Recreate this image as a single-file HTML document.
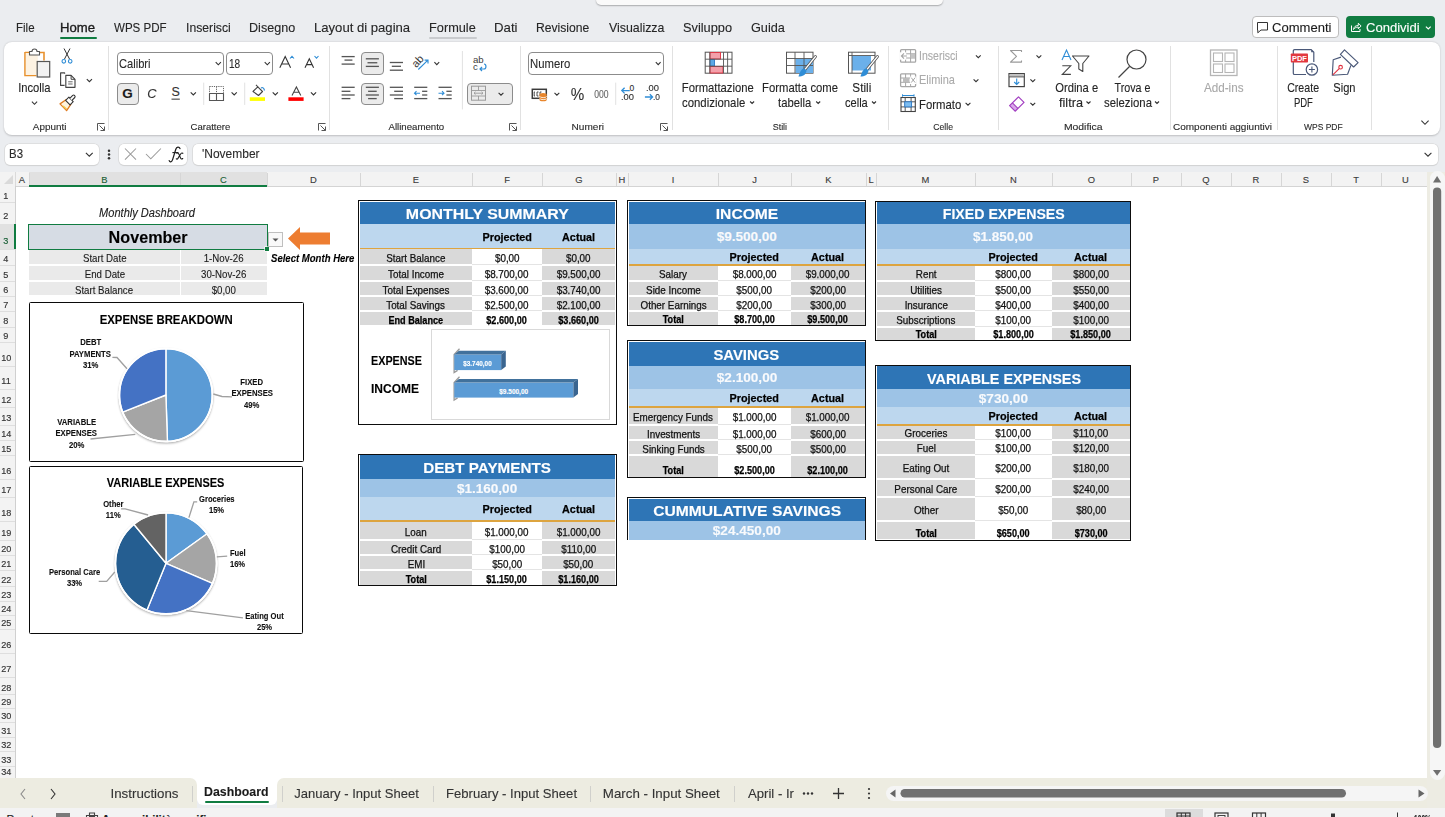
<!DOCTYPE html><html><head><meta charset="utf-8"><style>
*{margin:0;padding:0}
html,body{width:1445px;height:817px;overflow:hidden}
body{background:#EBEDF0;position:relative;font-family:"Liberation Sans",sans-serif}
.t{position:absolute;white-space:nowrap}
.r{position:absolute}
svg{overflow:visible}
</style></head><body>
<div class="r" style="left:596px;top:-10px;width:347px;height:15px;background:#FAFAFA;border-radius:0 0 5px 5px;box-shadow:0 1px 1.5px rgba(0,0,0,0.28)"></div>
<div class="t" style="left:16.00px;top:20.47px;font-size:13.4px;line-height:15.40px;color:#262626;transform:scaleX(0.8614);transform-origin:0 0;-webkit-text-stroke:0.12px currentColor;">File</div>
<div class="t" style="left:60.00px;top:20.47px;font-size:13.4px;line-height:15.40px;color:#1b1b1b;transform:scaleX(0.9791);transform-origin:0 0;-webkit-text-stroke:0.35px #1b1b1b;">Home</div>
<div class="t" style="left:114.30px;top:20.47px;font-size:13.4px;line-height:15.40px;color:#262626;transform:scaleX(0.8633);transform-origin:0 0;-webkit-text-stroke:0.12px currentColor;">WPS PDF</div>
<div class="t" style="left:185.50px;top:20.47px;font-size:13.4px;line-height:15.40px;color:#262626;transform:scaleX(0.9116);transform-origin:0 0;-webkit-text-stroke:0.12px currentColor;">Inserisci</div>
<div class="t" style="left:248.60px;top:20.47px;font-size:13.4px;line-height:15.40px;color:#262626;transform:scaleX(0.9397);transform-origin:0 0;-webkit-text-stroke:0.12px currentColor;">Disegno</div>
<div class="t" style="left:313.80px;top:20.47px;font-size:13.4px;line-height:15.40px;color:#262626;transform:scaleX(0.9781);transform-origin:0 0;-webkit-text-stroke:0.12px currentColor;">Layout di pagina</div>
<div class="t" style="left:429.00px;top:20.47px;font-size:13.4px;line-height:15.40px;color:#262626;transform:scaleX(0.9523);transform-origin:0 0;-webkit-text-stroke:0.12px currentColor;">Formule</div>
<div class="t" style="left:493.80px;top:20.47px;font-size:13.4px;line-height:15.40px;color:#262626;transform:scaleX(0.9862);transform-origin:0 0;-webkit-text-stroke:0.12px currentColor;">Dati</div>
<div class="t" style="left:536.30px;top:20.47px;font-size:13.4px;line-height:15.40px;color:#262626;transform:scaleX(0.9058);transform-origin:0 0;-webkit-text-stroke:0.12px currentColor;">Revisione</div>
<div class="t" style="left:609.00px;top:20.47px;font-size:13.4px;line-height:15.40px;color:#262626;transform:scaleX(0.9220);transform-origin:0 0;-webkit-text-stroke:0.12px currentColor;">Visualizza</div>
<div class="t" style="left:683.40px;top:20.47px;font-size:13.4px;line-height:15.40px;color:#262626;transform:scaleX(0.9552);transform-origin:0 0;-webkit-text-stroke:0.12px currentColor;">Sviluppo</div>
<div class="t" style="left:750.50px;top:20.47px;font-size:13.4px;line-height:15.40px;color:#262626;transform:scaleX(0.9480);transform-origin:0 0;-webkit-text-stroke:0.12px currentColor;">Guida</div>
<div class="r" style="left:60px;top:37px;width:36.5px;height:2.2px;background:#107C41;border-radius:1.1px;"></div>
<div class="r" style="left:428.5px;top:37.2px;width:48px;height:1.6px;background:#C9CBCE;border-radius:1px;"></div>
<div class="r" style="left:1252px;top:16px;width:86.5px;height:22px;background:#fff;border:1px solid #BDBDBD;border-radius:4px;box-sizing:border-box"></div>
<svg class="r" style="left:1255px;top:21px" width="16" height="14"><path d="M2.5 1.5 h10 v7.5 h-6.5 l-3.2 2.8 v-2.8 h-0.3 z" stroke="#333" stroke-width="1" fill="none" stroke-linejoin="round"/></svg>
<div class="t" style="left:1271.50px;top:19.77px;font-size:13.4px;line-height:15.40px;color:#1b1b1b;transform:scaleX(0.9744);transform-origin:0 0;-webkit-text-stroke:0.12px currentColor;">Commenti</div>
<div class="r" style="left:1346px;top:16px;width:89px;height:22px;background:#107C41;border-radius:4px"></div>
<svg class="r" style="left:1350px;top:21px" width="12" height="12"><path d="M1.5 4.5 v6 h8.5 v-2.5" stroke="#fff" stroke-width="1" fill="none"/><path d="M3.5 8.5 c0.4-2.8 2-4 4.8-4 v-2.3 l2.8 2.8 -2.8 2.8 v-1.8 c-2 0 -3.5 0.8 -4.8 2.5z" stroke="#fff" stroke-width="0.95" fill="none" stroke-linejoin="round"/></svg>
<div class="t" style="left:1365.50px;top:19.77px;font-size:13.4px;line-height:15.40px;color:#fff;transform:scaleX(0.9742);transform-origin:0 0;-webkit-text-stroke:0.12px currentColor;">Condividi</div>
<svg class="r" style="left:1420px;top:22px" width="14" height="12"><path d="M5.9,4.6 L8.3,7.0 L10.700000000000001,4.6" stroke="#fff" stroke-width="1.2" fill="none"/></svg>
<div class="r" style="left:4px;top:41.5px;width:1436px;height:93.8px;background:#fff;border-radius:8px;box-shadow:0 0.5px 2px rgba(0,0,0,0.20)"></div>
<svg class="r" style="left:0;top:0" width="1445" height="140">
<path d="M25 52.5 h5 M39.5 52.5 h4.5 v8" stroke="#E8912D" stroke-width="1.6" fill="none"/>
<path d="M25 52 v23.5 h11.5" stroke="#E8912D" stroke-width="1.6" fill="none"/>
<rect x="25.8" y="53" width="12" height="22" fill="#FDF3E3"/>
<path d="M29.5 55 v-3.5 h2.5 a2.5 2.5 0 0 1 5 0 h2.5 v3.5 z" stroke="#555" stroke-width="1.1" fill="#fff" stroke-linejoin="round"/>
<rect x="37.2" y="61.5" width="12.5" height="15.5" fill="#F2F2F2" stroke="#555" stroke-width="1.2"/>
<path d="M31.9,101.7 L34.5,104.3 L37.1,101.7" stroke="#333" stroke-width="1.1" fill="none"/>
<path d="M64 48.5 L69.5 59 M70 48.5 L64.5 59" stroke="#333" stroke-width="1" fill="none"/>
<circle cx="63.8" cy="61.3" r="1.8" stroke="#2F8DD6" stroke-width="1.1" fill="none"/><circle cx="70.2" cy="61.3" r="1.8" stroke="#2F8DD6" stroke-width="1.1" fill="none"/>
<path d="M64.6 73.8 V72.9 H60.6 V85.4 H64.6" stroke="#444" stroke-width="1.15" fill="none" stroke-linejoin="round"/>
<path d="M65.8 75.4 H71.1 L75 79.3 V87.3 H65.8 Z" stroke="#444" stroke-width="1.15" fill="#fff" stroke-linejoin="round"/><path d="M71.1 75.4 V79.3 H75" stroke="#444" stroke-width="1" fill="none"/><path d="M68.2 81.8 H72.6 M68.2 84 H72.6" stroke="#555" stroke-width="0.9"/>
<path d="M86.80000000000001,79.10000000000001 L89.4,81.7 L92.0,79.10000000000001" stroke="#333" stroke-width="1.1" fill="none"/>
<path d="M60 103.9 L66 99.7 L70.8 104.3 L66.6 110.6 Z" stroke="#E07B20" stroke-width="1.3" fill="#FFF3DC" stroke-linejoin="round"/><path d="M63 106 L66.5 109" stroke="#F2C94C" stroke-width="1.6"/>
<path d="M65.6 100.3 L68.9 97.2 L73.2 101.6 L70.1 104.8 Z" stroke="#333" stroke-width="1.1" fill="#fff" stroke-linejoin="round"/>
<path d="M69.8 98.3 L72.7 95.4 A1.5 1.5 0 0 1 74.8 97.5 L71.9 100.4" stroke="#333" stroke-width="1.1" fill="#fff" stroke-linejoin="round"/>
</svg>
<div class="t" style="left:15.23px;top:80.47px;font-size:13.4px;line-height:15.40px;color:#242424;transform:scaleX(0.8364);transform-origin:50% 0;-webkit-text-stroke:0.12px currentColor;">Incolla</div>
<div class="t" style="left:32.58px;top:120.83px;font-size:9.8px;line-height:11.26px;color:#2a2a2a;transform:scaleX(1.0109);transform-origin:50% 0;-webkit-text-stroke:0.12px currentColor;">Appunti</div>
<svg class="r" style="left:97px;top:122.5px" width="9" height="9"><path d="M0.5 7.5 v-7 h7" stroke="#555" stroke-width="1" fill="none"/><path d="M2.5 2.5 L7.5 7.5 M7.5 3.5 v4 h-4" stroke="#555" stroke-width="1" fill="none"/></svg>
<div class="r" style="left:108.3px;top:46px;width:1px;height:84px;background:#E1E1E1;"></div>
<div class="r" style="left:116.5px;top:52.3px;width:107.5px;height:22.5px;background:#fff;border:1px solid #8C8C8C;border-radius:4px;box-sizing:border-box"></div>
<div class="t" style="left:119.30px;top:56.64px;font-size:13px;line-height:14.94px;color:#2b2b2b;transform:scaleX(0.8550);transform-origin:0 0;-webkit-text-stroke:0.12px currentColor;">Calibri</div>
<div class="r" style="left:226.3px;top:52.3px;width:47.19999999999999px;height:22.5px;background:#fff;border:1px solid #8C8C8C;border-radius:4px;box-sizing:border-box"></div>
<div class="t" style="left:229.10px;top:56.64px;font-size:13px;line-height:14.94px;color:#2b2b2b;transform:scaleX(0.7745);transform-origin:0 0;-webkit-text-stroke:0.12px currentColor;">18</div>
<div class="r" style="left:116.5px;top:82.6px;width:22.30000000000001px;height:22.0px;background:#EBEBEB;border:1px solid #8C8C8C;border-radius:4px;box-sizing:border-box"></div>
<svg class="r" style="left:0;top:0" width="1445" height="140">
<path d="M215.70000000000002,62.2 L218.3,64.8 L220.9,62.2" stroke="#333" stroke-width="1.1" fill="none"/>
<path d="M264.7,62.2 L267.3,64.8 L269.90000000000003,62.2" stroke="#333" stroke-width="1.1" fill="none"/>
<path d="M279.8 67.8 L285.2 56.6 L290.6 67.8 M281.6 64 h7.2" stroke="#333" stroke-width="1.1" fill="none"/>
<path d="M290 58.5 L292 56.3 L294 58.5" stroke="#2F8DD6" stroke-width="1.1" fill="none"/>
<path d="M305 67.8 L309.3 58.7 L313.6 67.8 M306.6 64.6 h5.4" stroke="#333" stroke-width="1.1" fill="none"/>
<path d="M314.5 56 L316.5 58.2 L318.5 56" stroke="#2F8DD6" stroke-width="1.1" fill="none"/>
<rect x="171.5" y="98.6" width="8.3" height="1.1" fill="#444"/>
<path d="M190.70000000000002,92.4 L193.3,95.0 L195.9,92.4" stroke="#333" stroke-width="1.1" fill="none"/>

<rect x="203.2" y="82.6" width="1" height="22.3" fill="#E1E1E1"/>
<path d="M209.5 86.5 h14 v14 h-14 z M216.5 86.5 v14 M209.5 93.5 h14" stroke="#666" stroke-width="1" fill="none" stroke-dasharray="1.2 1"/>
<path d="M209.5 93.5 v7 h14 v-7 M216.5 93.5 v7 M209.5 93.5 h14" stroke="#555" stroke-width="1.1" fill="none"/>
<path d="M231.6,92.4 L234.2,95.0 L236.79999999999998,92.4" stroke="#333" stroke-width="1.1" fill="none"/>
<rect x="244.2" y="82.6" width="1" height="22.3" fill="#E1E1E1"/>
<path d="M253 91.5 L257.8 86.8 L262.5 91.5 L258.5 95.5 Z" stroke="#444" stroke-width="1.1" fill="#fff" stroke-linejoin="round"/><path d="M256 84.8 l2 2.2" stroke="#444" stroke-width="1.1"/>
<path d="M261 88 q2.5 -1.5 3.5 2.5" stroke="#2F8DD6" stroke-width="1.2" fill="none"/>
<rect x="249.8" y="97.3" width="15.2" height="3.6" fill="#FFFF00"/>
<path d="M272.7,92.4 L275.3,95.0 L277.90000000000003,92.4" stroke="#333" stroke-width="1.1" fill="none"/>
<path d="M292 95.4 L296.4 87 L300.8 95.4 M293.6 92.3 h5.6" stroke="#444" stroke-width="1.1" fill="none"/>
<rect x="288.4" y="97.3" width="15.2" height="3.6" fill="#FF0000"/>
<path d="M310.9,92.4 L313.5,95.0 L316.1,92.4" stroke="#333" stroke-width="1.1" fill="none"/>
</svg>
<div class="t" style="left:122.35px;top:85.58px;font-size:13.5px;line-height:15.51px;color:#1b1b1b;font-weight:bold;-webkit-text-stroke:0.12px currentColor;">G</div>
<div class="t" style="left:147.13px;top:85.58px;font-size:13.5px;line-height:15.51px;color:#333;transform:scaleX(0.9500);transform-origin:50% 0;font-style:italic;-webkit-text-stroke:0.12px currentColor;">C</div>
<div class="t" style="left:171.53px;top:85.49px;font-size:12.5px;line-height:14.36px;color:#333;-webkit-text-stroke:0.12px currentColor;">S</div>
<div class="t" style="left:190.37px;top:120.83px;font-size:9.8px;line-height:11.26px;color:#2a2a2a;transform:scaleX(0.9718);transform-origin:50% 0;-webkit-text-stroke:0.12px currentColor;">Carattere</div>
<svg class="r" style="left:318.3px;top:122.5px" width="9" height="9"><path d="M0.5 7.5 v-7 h7" stroke="#555" stroke-width="1" fill="none"/><path d="M2.5 2.5 L7.5 7.5 M7.5 3.5 v4 h-4" stroke="#555" stroke-width="1" fill="none"/></svg>
<div class="r" style="left:328.6px;top:46px;width:1px;height:84px;background:#E1E1E1;"></div>
<div class="r" style="left:361.3px;top:52.2px;width:22.5px;height:22.39999999999999px;background:#EBEBEB;border:1px solid #8C8C8C;border-radius:4px;box-sizing:border-box"></div>
<div class="r" style="left:361.3px;top:82.5px;width:22.5px;height:22.0px;background:#EBEBEB;border:1px solid #8C8C8C;border-radius:4px;box-sizing:border-box"></div>
<div class="r" style="left:467.4px;top:82.5px;width:45.4px;height:22px;background:#EBEBEB;border:1px solid #8C8C8C;border-radius:4px;box-sizing:border-box"></div>
<svg class="r" style="left:0;top:0" width="1445" height="140">
<rect x="341.6" y="55.95" width="13.099999999999966" height="1.3" fill="#555"/><rect x="344.5" y="59.45" width="7.899999999999977" height="1.3" fill="#555"/><rect x="341.6" y="63.449999999999996" width="13.099999999999966" height="1.3" fill="#555"/>
<rect x="365.8" y="58.15" width="13.099999999999966" height="1.3" fill="#555"/><rect x="367.5" y="62.1" width="9.800000000000011" height="1.3" fill="#555"/><rect x="365.8" y="65.75" width="13.099999999999966" height="1.3" fill="#555"/>
<rect x="389.8" y="61.85" width="13.199999999999989" height="1.3" fill="#555"/><rect x="391.8" y="65.64999999999999" width="9.199999999999989" height="1.3" fill="#555"/><rect x="389.8" y="69.55" width="13.199999999999989" height="1.3" fill="#555"/>
<text x="0" y="0" transform="translate(416.2 68.3) rotate(-47)" font-family="Liberation Sans" font-size="11" fill="#333">ab</text>
<path d="M418.3 69.5 L427.9 60.2 M424.6 60.1 h3.4 v3.4" stroke="#2F8DD6" stroke-width="1.15" fill="none"/>
<path d="M434.40000000000003,62.199999999999996 L436.8,64.6 L439.2,62.199999999999996" stroke="#333" stroke-width="1.1" fill="none"/>
<rect x="461.9" y="51" width="1" height="58.4" fill="#E1E1E1"/>
<text x="473" y="62.9" font-family="Liberation Sans" font-size="9.6" fill="#3a3a3a">ab</text><text x="473" y="69.9" font-family="Liberation Sans" font-size="9.6" fill="#3a3a3a">c</text>
<path d="M484 64 c2.6 0 2.6 5 0 5 h-4 M482 67 l-2 2 2 2" stroke="#2F8DD6" stroke-width="1.2" fill="none"/>
<rect x="341.6" y="86.64999999999999" width="13.099999999999966" height="1.3" fill="#555"/><rect x="341.6" y="90.64999999999999" width="8.799999999999955" height="1.3" fill="#555"/><rect x="341.6" y="94.35" width="13.099999999999966" height="1.3" fill="#555"/><rect x="341.6" y="97.94999999999999" width="8.799999999999955" height="1.3" fill="#555"/>
<rect x="365.8" y="86.64999999999999" width="13.099999999999966" height="1.3" fill="#555"/><rect x="368.1" y="90.64999999999999" width="8.599999999999966" height="1.3" fill="#555"/><rect x="365.8" y="94.35" width="13.099999999999966" height="1.3" fill="#555"/><rect x="368.1" y="97.94999999999999" width="8.599999999999966" height="1.3" fill="#555"/>
<rect x="389.8" y="86.64999999999999" width="13.199999999999989" height="1.3" fill="#555"/><rect x="394.2" y="90.64999999999999" width="8.800000000000011" height="1.3" fill="#555"/><rect x="389.8" y="94.35" width="13.199999999999989" height="1.3" fill="#555"/><rect x="394.2" y="97.94999999999999" width="8.800000000000011" height="1.3" fill="#555"/>
<rect x="414.2" y="86.64999999999999" width="13.100000000000023" height="1.3" fill="#555"/><rect x="422.1" y="90.64999999999999" width="5.199999999999989" height="1.3" fill="#555"/><rect x="422.1" y="94.35" width="5.199999999999989" height="1.3" fill="#555"/><rect x="414.2" y="97.94999999999999" width="13.100000000000023" height="1.3" fill="#555"/>
<path d="M420 93.2 h-5.5 M416.5 91.2 l-2 2 2 2" stroke="#2F8DD6" stroke-width="1.1" fill="none"/>
<rect x="438.5" y="86.64999999999999" width="13.199999999999989" height="1.3" fill="#555"/><rect x="446.4" y="90.64999999999999" width="5.300000000000011" height="1.3" fill="#555"/><rect x="446.4" y="94.35" width="5.300000000000011" height="1.3" fill="#555"/><rect x="438.5" y="97.94999999999999" width="13.199999999999989" height="1.3" fill="#555"/>
<path d="M438.5 93.2 h5.5 M442 91.2 l2 2 -2 2" stroke="#2F8DD6" stroke-width="1.1" fill="none"/>
<rect x="471.5" y="86.2" width="14" height="14" fill="none" stroke="#9A9A9A" stroke-width="1"/><path d="M471.5 90.5 h14 M471.5 96 h14 M478.5 86.2 v4.3 M478.5 96 v4.2" stroke="#9A9A9A" stroke-width="0.9"/><path d="M474 93.2 h9 M475.5 91.8 l-1.5 1.4 1.5 1.4 M481.5 91.8 l1.5 1.4 -1.5 1.4" stroke="#9A9A9A" stroke-width="0.9" fill="none"/>
<path d="M498.6,92.8 L501,95.2 L503.4,92.8" stroke="#333" stroke-width="1.1" fill="none"/>
</svg>
<div class="t" style="left:388.27px;top:120.83px;font-size:9.8px;line-height:11.26px;color:#2a2a2a;transform:scaleX(0.9831);transform-origin:50% 0;-webkit-text-stroke:0.12px currentColor;">Allineamento</div>
<svg class="r" style="left:508.5px;top:122.5px" width="9" height="9"><path d="M0.5 7.5 v-7 h7" stroke="#555" stroke-width="1" fill="none"/><path d="M2.5 2.5 L7.5 7.5 M7.5 3.5 v4 h-4" stroke="#555" stroke-width="1" fill="none"/></svg>
<div class="r" style="left:520.2px;top:46px;width:1px;height:84px;background:#E1E1E1;"></div>
<div class="r" style="left:528.1px;top:52.2px;width:135.69999999999993px;height:22.39999999999999px;background:#fff;border:1px solid #8C8C8C;border-radius:4px;box-sizing:border-box"></div>
<div class="t" style="left:530.40px;top:56.64px;font-size:13px;line-height:14.94px;color:#2b2b2b;transform:scaleX(0.8716);transform-origin:0 0;-webkit-text-stroke:0.12px currentColor;">Numero</div>
<svg class="r" style="left:0;top:0" width="1445" height="140">
<path d="M655.8000000000001,62.199999999999996 L658.2,64.6 L660.6,62.199999999999996" stroke="#333" stroke-width="1.1" fill="none"/>
<rect x="532.3" y="89.3" width="14" height="9" fill="none" stroke="#3a3a3a" stroke-width="1.5"/><path d="M535 92 h-0.8 v4 h0.8 M538.5 92 h-1.5 v4 h1.5 M541.5 92 h-1.5 v4 h1.5" stroke="#3a3a3a" stroke-width="0.9" fill="none"/>
<path d="M539.5 94.5 a3.6 1.5 0 0 1 7.2 0 v5.2 a3.6 1.5 0 0 1 -7.2 0 z" fill="#E8852A"/><path d="M539.8 96.3 a3.4 1.3 0 0 0 6.8 0 M539.8 98.3 a3.4 1.3 0 0 0 6.8 0" stroke="#fff" stroke-width="0.8" fill="none"/>
<path d="M554.5,92.8 L556.9,95.2 L559.3,92.8" stroke="#333" stroke-width="1.1" fill="none"/>
<rect x="615.2" y="82.6" width="1" height="22.3" fill="#E1E1E1"/>
<path d="M629.8 90.6 H621.8 M624.6 87.8 L621.8 90.6 L624.6 93.4" stroke="#2F8DD6" stroke-width="1.3" fill="none"/>
<path d="M644.9 97 H652.6 M649.8 94.2 L652.6 97 L649.8 99.8" stroke="#2F8DD6" stroke-width="1.3" fill="none"/>
</svg>
<div class="t" style="left:570.44px;top:84.91px;font-size:17px;line-height:19.53px;color:#333;transform:scaleX(0.8931);transform-origin:50% 0;-webkit-text-stroke:0.12px currentColor;">%</div>
<div class="t" style="left:593.46px;top:88.65px;font-size:10px;line-height:11.49px;color:#666;transform:scaleX(0.8570);transform-origin:50% 0;-webkit-text-stroke:0.12px currentColor;">000</div>
<div class="t" style="left:629.50px;top:84.11px;font-size:8.5px;line-height:9.77px;color:#333;-webkit-text-stroke:0.12px currentColor;">0</div>
<div class="t" style="left:621.00px;top:92.61px;font-size:8.5px;line-height:9.77px;color:#333;transform:scaleX(1.1002);transform-origin:0 0;-webkit-text-stroke:0.12px currentColor;">.00</div>
<div class="t" style="left:646.00px;top:84.41px;font-size:8.5px;line-height:9.77px;color:#333;transform:scaleX(1.1002);transform-origin:0 0;-webkit-text-stroke:0.12px currentColor;">.00</div>
<div class="t" style="left:652.50px;top:92.61px;font-size:8.5px;line-height:9.77px;color:#333;transform:scaleX(0.9875);transform-origin:0 0;-webkit-text-stroke:0.12px currentColor;">.0</div>
<div class="t" style="left:571.71px;top:120.83px;font-size:9.8px;line-height:11.26px;color:#2a2a2a;transform:scaleX(1.0259);transform-origin:50% 0;-webkit-text-stroke:0.12px currentColor;">Numeri</div>
<svg class="r" style="left:660px;top:122.5px" width="9" height="9"><path d="M0.5 7.5 v-7 h7" stroke="#555" stroke-width="1" fill="none"/><path d="M2.5 2.5 L7.5 7.5 M7.5 3.5 v4 h-4" stroke="#555" stroke-width="1" fill="none"/></svg>
<div class="r" style="left:671.5px;top:46px;width:1px;height:84px;background:#E1E1E1;"></div>
<svg class="r" style="left:0;top:0" width="1445" height="140">
<rect x="705.2" y="52.2" width="26.8" height="21" fill="#fff" stroke="#555" stroke-width="1"/>
<rect x="710" y="52.5" width="10.5" height="6.5" fill="#F4A0AA" stroke="#E0303F" stroke-width="0.9"/>
<rect x="710" y="59.5" width="4.5" height="6.6" fill="#5DA8E5" stroke="#2F7BC8" stroke-width="0.9"/>
<rect x="710" y="66.5" width="13" height="6.5" fill="#F4A0AA" stroke="#E0303F" stroke-width="0.9"/>
<path d="M705.2 59.2 h26.8 M705.2 66.2 h26.8 M709.8 52.2 v21 M723.5 52.2 v21 M727.6 52.2 v21" stroke="#555" stroke-width="0.9"/>
<rect x="786.5" y="52.2" width="26.5" height="21" fill="#fff" stroke="#555" stroke-width="1"/>
<rect x="795.5" y="59" width="17.5" height="14" fill="#6BB0EA"/>
<path d="M786.5 58.5 h26.5 M786.5 65.5 h26.5 M795 52.2 v21 M804 52.2 v21" stroke="#555" stroke-width="0.9"/>
<path d="M815.5 56.5 L804.5 70" stroke="#555" stroke-width="2.8" stroke-linecap="round"/><path d="M815.5 56.5 L804.5 70" stroke="#fff" stroke-width="1.2" stroke-linecap="round"/>
<path d="M804.5 68.5 c-3 0 -4.5 3 -6 8 c4 0 7.5 -1.5 8 -6 z" fill="#2F8DD6"/>
<rect x="848.5" y="52.2" width="26.5" height="21" fill="#fff" stroke="#555" stroke-width="1"/>
<rect x="852" y="56" width="19" height="14.5" fill="#6BB0EA"/>
<path d="M848.5 55.5 h26.5 M852 52.2 v21" stroke="#555" stroke-width="0.9"/>
<path d="M877.5 56.5 L866.5 70" stroke="#555" stroke-width="2.8" stroke-linecap="round"/><path d="M877.5 56.5 L866.5 70" stroke="#fff" stroke-width="1.2" stroke-linecap="round"/>
<path d="M866.5 68.5 c-3 0 -4.5 3 -6 8 c4 0 7.5 -1.5 8 -6 z" fill="#2F8DD6"/>
<path d="M750.1,101.5 L752.1,103.5 L754.1,101.5" stroke="#333" stroke-width="1.1" fill="none"/>
<path d="M816.2,101.5 L818.2,103.5 L820.2,101.5" stroke="#333" stroke-width="1.1" fill="none"/>
<path d="M872.0,101.5 L874,103.5 L876.0,101.5" stroke="#333" stroke-width="1.1" fill="none"/>
</svg>
<div class="t" style="left:675.17px;top:79.97px;font-size:13.4px;line-height:15.40px;color:#242424;transform:scaleX(0.8406);transform-origin:50% 0;-webkit-text-stroke:0.12px currentColor;">Formattazione</div>
<div class="t" style="left:681.60px;top:95.17px;font-size:13.4px;line-height:15.40px;color:#242424;transform:scaleX(0.8497);transform-origin:0 0;-webkit-text-stroke:0.12px currentColor;">condizionale</div>
<div class="t" style="left:755.15px;top:79.97px;font-size:13.4px;line-height:15.40px;color:#242424;transform:scaleX(0.8435);transform-origin:50% 0;-webkit-text-stroke:0.12px currentColor;">Formatta come</div>
<div class="t" style="left:778.10px;top:95.17px;font-size:13.4px;line-height:15.40px;color:#242424;transform:scaleX(0.8433);transform-origin:0 0;-webkit-text-stroke:0.12px currentColor;">tabella</div>
<div class="t" style="left:850.50px;top:79.97px;font-size:13.4px;line-height:15.40px;color:#242424;transform:scaleX(0.8753);transform-origin:50% 0;-webkit-text-stroke:0.12px currentColor;">Stili</div>
<div class="t" style="left:845.20px;top:95.17px;font-size:13.4px;line-height:15.40px;color:#242424;transform:scaleX(0.8273);transform-origin:0 0;-webkit-text-stroke:0.12px currentColor;">cella</div>
<div class="t" style="left:772.00px;top:120.83px;font-size:9.8px;line-height:11.26px;color:#2a2a2a;transform:scaleX(0.9119);transform-origin:50% 0;-webkit-text-stroke:0.12px currentColor;">Stili</div>
<div class="r" style="left:888.4px;top:46px;width:1px;height:84px;background:#E1E1E1;"></div>
<svg class="r" style="left:0;top:0" width="1445" height="140">
<rect x="900.6" y="49.6" width="15" height="12.6" rx="1" fill="#fff" stroke="#A6A6A6" stroke-width="1.3"/><path d="M900.6 53.8 H915.6 M900.6 58 H915.6 M905.6 49.6 V62.2 M910.6 49.6 V62.2" stroke="#A6A6A6" stroke-width="1"/><rect x="910.6" y="53.8" width="4.4" height="4.2" fill="#C4C4C4"/><rect x="900" y="52.3" width="6.2" height="7.4" fill="#fff"/><path d="M906.8 56 H901.6 M904 53.4 L901.4 56 L904 58.6" stroke="#A6A6A6" stroke-width="1.1" fill="none"/>
<rect x="900.6" y="73.8" width="15" height="12.8" rx="1" fill="#fff" stroke="#A6A6A6" stroke-width="1.3"/><path d="M900.6 78 H915.6 M900.6 82.3 H915.6 M905.6 73.8 V86.6 M910.6 73.8 V86.6" stroke="#A6A6A6" stroke-width="1"/><rect x="903" y="78" width="6.5" height="4.3" fill="#BDBDBD"/><rect x="910" y="76.6" width="6.5" height="7.4" fill="#fff"/><path d="M911.2 77.6 L915.2 82.6 M915.2 77.6 L911.2 82.6" stroke="#A6A6A6" stroke-width="1"/>
<rect x="901" y="97.5" width="14.3" height="14" fill="none" stroke="#444" stroke-width="1.1"/><path d="M901 101.8 h14.3 M901 106.9 h14.3 M905.2 97.5 v14 M911.1 97.5 v14" stroke="#444" stroke-width="0.9"/><rect x="904.7" y="101.8" width="6.9" height="5.1" fill="#7DBDF0" stroke="#2F7BC8" stroke-width="0.9"/><path d="M902.5 95.5 h11.5 M902.5 94.3 v2.4 M914 94.3 v2.4" stroke="#2F8DD6" stroke-width="1"/>
<path d="M975.9,55.3 L978.3,57.7 L980.6999999999999,55.3" stroke="#333" stroke-width="1.1" fill="none"/>
<path d="M973.6,79.3 L976,81.7 L978.4,79.3" stroke="#333" stroke-width="1.1" fill="none"/>
<path d="M965.6,102.8 L968,105.2 L970.4,102.8" stroke="#333" stroke-width="1.1" fill="none"/>
</svg>
<div class="t" style="left:919.30px;top:48.27px;font-size:13.4px;line-height:15.40px;color:#ABABAB;transform:scaleX(0.7875);transform-origin:0 0;-webkit-text-stroke:0.12px currentColor;">Inserisci</div>
<div class="t" style="left:919.30px;top:72.47px;font-size:13.4px;line-height:15.40px;color:#ABABAB;transform:scaleX(0.8193);transform-origin:0 0;-webkit-text-stroke:0.12px currentColor;">Elimina</div>
<div class="t" style="left:919.30px;top:96.77px;font-size:13.4px;line-height:15.40px;color:#242424;transform:scaleX(0.8478);transform-origin:0 0;-webkit-text-stroke:0.12px currentColor;">Formato</div>
<div class="t" style="left:931.53px;top:120.83px;font-size:9.8px;line-height:11.26px;color:#2a2a2a;transform:scaleX(0.8866);transform-origin:50% 0;-webkit-text-stroke:0.12px currentColor;">Celle</div>
<div class="r" style="left:997.6px;top:46px;width:1px;height:84px;background:#E1E1E1;"></div>
<svg class="r" style="left:0;top:0" width="1445" height="140">
<path d="M1021.5 52 v-1.5 h-11 l6 5.8 -6 5.8 h11 v-1.5" stroke="#999" stroke-width="1.1" fill="none" stroke-linejoin="round"/>
<path d="M1036.5,55.3 L1038.9,57.7 L1041.3000000000002,55.3" stroke="#333" stroke-width="1.1" fill="none"/>
<rect x="1009" y="73.6" width="15.3" height="13" fill="#fff" stroke="#444" stroke-width="1.2"/><rect x="1009.6" y="74.2" width="14.1" height="2.4" fill="#BFBFBF"/><path d="M1009 76.9 h15.3" stroke="#444" stroke-width="0.9"/><path d="M1016.7 78.5 v6 M1014.2 82 l2.5 2.5 2.5 -2.5" stroke="#2F8DD6" stroke-width="1.1" fill="none"/>
<path d="M1030.3999999999999,79.3 L1032.8,81.7 L1035.2,79.3" stroke="#333" stroke-width="1.1" fill="none"/>
<path d="M1009.6 105.7 L1012.4 102.9 L1017.9 108.4 L1015.1 111.2 Z" fill="#D9A8EA"/><path d="M1009.6 105.7 L1018.5 96.8 L1024 102.4 L1015.1 111.2 Z M1012.4 102.9 L1017.9 108.4" fill="none" stroke="#A23FC1" stroke-width="1.2" stroke-linejoin="round"/>
<path d="M1030.3999999999999,102.8 L1032.8,105.2 L1035.2,102.8" stroke="#333" stroke-width="1.1" fill="none"/>
<path d="M1062 60 L1066.5 50 L1071 60 M1063.6 56.5 h5.8" stroke="#2F8DD6" stroke-width="1.1" fill="none"/><path d="M1062.3 65.8 h8.4 l-8.4 8.6 h8.6" stroke="#444" stroke-width="1.1" fill="none"/>
<path d="M1072.5 56 h16.5 l-6.2 7.5 v8 l-4 -2.5 v-5.5 z" stroke="#444" stroke-width="1.1" fill="none" stroke-linejoin="round"/>
<path d="M1086.5,101.5 L1088.5,103.5 L1090.5,101.5" stroke="#333" stroke-width="1.1" fill="none"/>
<circle cx="1136.5" cy="59.5" r="9.5" stroke="#444" stroke-width="1.2" fill="none"/><path d="M1129.5 66.5 L1118.5 77.5" stroke="#444" stroke-width="1.3"/>
<path d="M1155.0,101.5 L1157,103.5 L1159.0,101.5" stroke="#333" stroke-width="1.1" fill="none"/>
</svg>
<div class="t" style="left:1050.50px;top:79.97px;font-size:13.4px;line-height:15.40px;color:#242424;transform:scaleX(0.8347);transform-origin:50% 0;-webkit-text-stroke:0.12px currentColor;">Ordina e</div>
<div class="t" style="left:1059.00px;top:95.17px;font-size:13.4px;line-height:15.40px;color:#242424;transform:scaleX(0.9480);transform-origin:0 0;-webkit-text-stroke:0.12px currentColor;">filtra</div>
<div class="t" style="left:1109.83px;top:79.97px;font-size:13.4px;line-height:15.40px;color:#242424;transform:scaleX(0.7990);transform-origin:50% 0;-webkit-text-stroke:0.12px currentColor;">Trova e</div>
<div class="t" style="left:1103.70px;top:95.17px;font-size:13.4px;line-height:15.40px;color:#242424;transform:scaleX(0.8478);transform-origin:0 0;-webkit-text-stroke:0.12px currentColor;">seleziona</div>
<div class="t" style="left:1065.15px;top:120.83px;font-size:9.8px;line-height:11.26px;color:#2a2a2a;transform:scaleX(1.0605);transform-origin:50% 0;-webkit-text-stroke:0.12px currentColor;">Modifica</div>
<div class="r" style="left:1170.2px;top:46px;width:1px;height:84px;background:#E1E1E1;"></div>
<svg class="r" style="left:0;top:0" width="1445" height="140">
<rect x="1210.5" y="50" width="26.5" height="25.5" fill="none" stroke="#B5B5B5" stroke-width="1.3"/><rect x="1213.5" y="53" width="9" height="8.5" fill="none" stroke="#B5B5B5" stroke-width="1.1"/><rect x="1225" y="53" width="9" height="8.5" fill="none" stroke="#B5B5B5" stroke-width="1.1"/><rect x="1213.5" y="64" width="9" height="8.5" fill="none" stroke="#B5B5B5" stroke-width="1.1"/><rect x="1225" y="64" width="9" height="8.5" fill="none" stroke="#B5B5B5" stroke-width="1.1"/>
<path d="M1306 74.5 H1294.6 a1.3 1.3 0 0 1 -1.3 -1.3 V50.9 a1.3 1.3 0 0 1 1.3 -1.3 H1311.2 L1313.8 52.2 V62" stroke="#4A5878" stroke-width="1.2" fill="#fff" stroke-linejoin="round"/><path d="M1311.2 49.6 L1313.8 52.2 L1311.2 52.2 Z" fill="#4A5878"/>
<rect x="1290.8" y="53.5" width="17.2" height="9.1" rx="0.8" fill="#E2383F"/><text x="1291.9" y="61.2" font-family="Liberation Sans" font-size="8" font-weight="bold" fill="#fff" textLength="15" lengthAdjust="spacingAndGlyphs">PDF</text>
<circle cx="1311.9" cy="69.5" r="5.7" fill="#fff" stroke="#4A5878" stroke-width="1.2"/><path d="M1311.9 66.5 v6 M1308.9 69.5 h6" stroke="#4A5878" stroke-width="1.1"/>
<path d="M1340.9 57.1 L1333.2 59.8 L1332.3 75.3 L1347.6 74.2 L1350.9 65.4" stroke="#4A5878" stroke-width="1.15" fill="#fff" stroke-linejoin="round"/>
<path d="M1340.4 54.3 L1344.5 49.8 L1358.1 62.6 L1353.6 67 Z" stroke="#4A5878" stroke-width="1.15" fill="#fff" stroke-linejoin="round"/>
<path d="M1332.8 74.8 L1339.2 68.6" stroke="#E0303F" stroke-width="1.1"/><circle cx="1340.6" cy="67.2" r="1.8" fill="#fff" stroke="#E0303F" stroke-width="1.1"/>
<path d="M1421.4,120.7 L1425,124.3 L1428.6,120.7" stroke="#333" stroke-width="1.1" fill="none"/>
</svg>
<div class="t" style="left:1201.08px;top:79.97px;font-size:13.4px;line-height:15.40px;color:#A8A8A8;transform:scaleX(0.8715);transform-origin:50% 0;-webkit-text-stroke:0.12px currentColor;">Add-ins</div>
<div class="t" style="left:1174.21px;top:120.83px;font-size:9.8px;line-height:11.26px;color:#2a2a2a;transform:scaleX(1.0209);transform-origin:50% 0;-webkit-text-stroke:0.12px currentColor;">Componenti aggiuntivi</div>
<div class="r" style="left:1276.5px;top:46px;width:1px;height:84px;background:#E1E1E1;"></div>
<div class="t" style="left:1283.09px;top:79.97px;font-size:13.4px;line-height:15.40px;color:#242424;transform:scaleX(0.7931);transform-origin:50% 0;-webkit-text-stroke:0.12px currentColor;">Create</div>
<div class="t" style="left:1290.10px;top:95.17px;font-size:13.4px;line-height:15.40px;color:#242424;transform:scaleX(0.7089);transform-origin:50% 0;-webkit-text-stroke:0.12px currentColor;">PDF</div>
<div class="t" style="left:1330.99px;top:79.97px;font-size:13.4px;line-height:15.40px;color:#242424;transform:scaleX(0.8277);transform-origin:50% 0;-webkit-text-stroke:0.12px currentColor;">Sign</div>
<div class="t" style="left:1300.98px;top:120.83px;font-size:9.8px;line-height:11.26px;color:#2a2a2a;transform:scaleX(0.8668);transform-origin:50% 0;-webkit-text-stroke:0.12px currentColor;">WPS PDF</div>
<div class="r" style="left:1371.2px;top:46px;width:1px;height:84px;background:#E1E1E1;"></div>
<div class="r" style="left:4.6px;top:143.6px;width:94.6px;height:21.6px;background:#fff;border-radius:5px;box-shadow:0 0 0 0.6px #D4D4D4, 0 0.6px 1px rgba(0,0,0,0.12)"></div>
<div class="t" style="left:9.30px;top:146.63px;font-size:13px;line-height:14.94px;color:#2b2b2b;transform:scaleX(0.8804);transform-origin:0 0;-webkit-text-stroke:0.12px currentColor;">B3</div>
<div class="r" style="left:119px;top:143.6px;width:68.3px;height:21.6px;background:#fff;border-radius:5px;box-shadow:0 0 0 0.6px #D4D4D4, 0 0.6px 1px rgba(0,0,0,0.12)"></div>
<div class="r" style="left:192.6px;top:143.6px;width:1245.5px;height:21.6px;background:#fff;border-radius:5px;box-shadow:0 0 0 0.6px #D4D4D4, 0 0.6px 1px rgba(0,0,0,0.12)"></div>
<div class="t" style="left:202.40px;top:146.63px;font-size:13px;line-height:14.94px;color:#2b2b2b;transform:scaleX(0.9223);transform-origin:0 0;-webkit-text-stroke:0.12px currentColor;">'November</div>
<svg class="r" style="left:0;top:0" width="1445" height="170">
<path d="M85.89999999999999,152.8 L89.3,156.2 L92.7,152.8" stroke="#333" stroke-width="1.1" fill="none"/>
<circle cx="109" cy="150.7" r="1.25" fill="#333"/><circle cx="109" cy="154.4" r="1.25" fill="#333"/><circle cx="109" cy="158.2" r="1.25" fill="#333"/>
<path d="M125 148.5 L136 159.7 M136 148.5 L125 159.7" stroke="#9A9A9A" stroke-width="1.05"/>
<path d="M146 154 L150.8 158.8 L160.9 148.5" stroke="#9A9A9A" stroke-width="1.05" fill="none"/>
<path d="M1424.6,152.8 L1428,156.2 L1431.4,152.8" stroke="#333" stroke-width="1.1" fill="none"/>
</svg>
<svg class="r" style="left:0;top:0" width="200" height="170"><path d="M180 148.6 C179.2 146.6 176.6 146.6 175.8 149.2 L172.6 159.6 C171.8 162.3 169.8 162.4 169.2 160.6" stroke="#1e1e1e" stroke-width="1.25" fill="none" stroke-linecap="round"/><path d="M172.4 152.6 H178.4" stroke="#1e1e1e" stroke-width="1.1"/><path d="M176.8 153.2 C177.9 152.5 178.6 153.2 179.1 154.6 L180.5 157.9 C181 159.1 181.8 159.3 182.7 158.5 M182.8 153.3 C181.9 152.5 181 153.2 180.2 154.6 L178.3 157.7 C177.7 158.9 177 159.4 176.3 158.8" stroke="#1e1e1e" stroke-width="1.15" fill="none" stroke-linecap="round"/></svg>
<div class="r" style="left:15px;top:186px;width:1412px;height:592.5px;background:#fff"></div>
<div class="r" style="left:0px;top:171.5px;width:1430px;height:14.5px;background:#F3F3F3;"></div>
<div class="r" style="left:0px;top:185.5px;width:1430px;height:0.8px;background:#D4D4D4;"></div>
<svg class="r" style="left:0;top:172px" width="15" height="14"><path d="M13 3 L13 12 L4 12 Z" fill="#DADADA"/></svg>
<div class="r" style="left:29px;top:171.5px;width:151px;height:14.5px;background:#E1E1E1;"></div>
<div class="r" style="left:180px;top:171.5px;width:87px;height:14.5px;background:#E1E1E1;"></div>
<div class="r" style="left:28.5px;top:173px;width:1px;height:12.5px;background:#D6D6D6;"></div>
<div class="t" style="left:18.86px;top:174.69px;font-size:9.4px;line-height:10.80px;color:#3a3a3a;-webkit-text-stroke:0.12px currentColor;">A</div>
<div class="r" style="left:179.5px;top:173px;width:1px;height:12.5px;background:#D6D6D6;"></div>
<div class="t" style="left:101.36px;top:174.69px;font-size:9.4px;line-height:10.80px;color:#185E34;-webkit-text-stroke:0.12px currentColor;">B</div>
<div class="r" style="left:266.5px;top:173px;width:1px;height:12.5px;background:#D6D6D6;"></div>
<div class="t" style="left:220.11px;top:174.69px;font-size:9.4px;line-height:10.80px;color:#185E34;-webkit-text-stroke:0.12px currentColor;">C</div>
<div class="r" style="left:359.5px;top:173px;width:1px;height:12.5px;background:#D6D6D6;"></div>
<div class="t" style="left:310.11px;top:174.69px;font-size:9.4px;line-height:10.80px;color:#3a3a3a;-webkit-text-stroke:0.12px currentColor;">D</div>
<div class="r" style="left:471.5px;top:173px;width:1px;height:12.5px;background:#D6D6D6;"></div>
<div class="t" style="left:412.86px;top:174.69px;font-size:9.4px;line-height:10.80px;color:#3a3a3a;-webkit-text-stroke:0.12px currentColor;">E</div>
<div class="r" style="left:541.5px;top:173px;width:1px;height:12.5px;background:#D6D6D6;"></div>
<div class="t" style="left:504.13px;top:174.69px;font-size:9.4px;line-height:10.80px;color:#3a3a3a;-webkit-text-stroke:0.12px currentColor;">F</div>
<div class="r" style="left:615.5px;top:173px;width:1px;height:12.5px;background:#D6D6D6;"></div>
<div class="t" style="left:575.34px;top:174.69px;font-size:9.4px;line-height:10.80px;color:#3a3a3a;-webkit-text-stroke:0.12px currentColor;">G</div>
<div class="r" style="left:627.5px;top:173px;width:1px;height:12.5px;background:#D6D6D6;"></div>
<div class="t" style="left:618.61px;top:174.69px;font-size:9.4px;line-height:10.80px;color:#3a3a3a;-webkit-text-stroke:0.12px currentColor;">H</div>
<div class="r" style="left:717.5px;top:173px;width:1px;height:12.5px;background:#D6D6D6;"></div>
<div class="t" style="left:671.69px;top:174.69px;font-size:9.4px;line-height:10.80px;color:#3a3a3a;-webkit-text-stroke:0.12px currentColor;">I</div>
<div class="r" style="left:790.5px;top:173px;width:1px;height:12.5px;background:#D6D6D6;"></div>
<div class="t" style="left:752.15px;top:174.69px;font-size:9.4px;line-height:10.80px;color:#3a3a3a;-webkit-text-stroke:0.12px currentColor;">J</div>
<div class="r" style="left:865.5px;top:173px;width:1px;height:12.5px;background:#D6D6D6;"></div>
<div class="t" style="left:825.36px;top:174.69px;font-size:9.4px;line-height:10.80px;color:#3a3a3a;-webkit-text-stroke:0.12px currentColor;">K</div>
<div class="r" style="left:875.5px;top:173px;width:1px;height:12.5px;background:#D6D6D6;"></div>
<div class="t" style="left:868.39px;top:174.69px;font-size:9.4px;line-height:10.80px;color:#3a3a3a;-webkit-text-stroke:0.12px currentColor;">L</div>
<div class="r" style="left:974.5px;top:173px;width:1px;height:12.5px;background:#D6D6D6;"></div>
<div class="t" style="left:921.58px;top:174.69px;font-size:9.4px;line-height:10.80px;color:#3a3a3a;-webkit-text-stroke:0.12px currentColor;">M</div>
<div class="r" style="left:1051.5px;top:173px;width:1px;height:12.5px;background:#D6D6D6;"></div>
<div class="t" style="left:1010.11px;top:174.69px;font-size:9.4px;line-height:10.80px;color:#3a3a3a;-webkit-text-stroke:0.12px currentColor;">N</div>
<div class="r" style="left:1130.5px;top:173px;width:1px;height:12.5px;background:#D6D6D6;"></div>
<div class="t" style="left:1087.84px;top:174.69px;font-size:9.4px;line-height:10.80px;color:#3a3a3a;-webkit-text-stroke:0.12px currentColor;">O</div>
<div class="r" style="left:1180.5px;top:173px;width:1px;height:12.5px;background:#D6D6D6;"></div>
<div class="t" style="left:1152.86px;top:174.69px;font-size:9.4px;line-height:10.80px;color:#3a3a3a;-webkit-text-stroke:0.12px currentColor;">P</div>
<div class="r" style="left:1230.5px;top:173px;width:1px;height:12.5px;background:#D6D6D6;"></div>
<div class="t" style="left:1202.34px;top:174.69px;font-size:9.4px;line-height:10.80px;color:#3a3a3a;-webkit-text-stroke:0.12px currentColor;">Q</div>
<div class="r" style="left:1280.5px;top:173px;width:1px;height:12.5px;background:#D6D6D6;"></div>
<div class="t" style="left:1252.61px;top:174.69px;font-size:9.4px;line-height:10.80px;color:#3a3a3a;-webkit-text-stroke:0.12px currentColor;">R</div>
<div class="r" style="left:1330.5px;top:173px;width:1px;height:12.5px;background:#D6D6D6;"></div>
<div class="t" style="left:1302.86px;top:174.69px;font-size:9.4px;line-height:10.80px;color:#3a3a3a;-webkit-text-stroke:0.12px currentColor;">S</div>
<div class="r" style="left:1380.5px;top:173px;width:1px;height:12.5px;background:#D6D6D6;"></div>
<div class="t" style="left:1353.13px;top:174.69px;font-size:9.4px;line-height:10.80px;color:#3a3a3a;-webkit-text-stroke:0.12px currentColor;">T</div>
<div class="r" style="left:1429.5px;top:173px;width:1px;height:12.5px;background:#D6D6D6;"></div>
<div class="t" style="left:1402.11px;top:174.69px;font-size:9.4px;line-height:10.80px;color:#3a3a3a;-webkit-text-stroke:0.12px currentColor;">U</div>
<div class="r" style="left:29px;top:184.5px;width:238px;height:2px;background:#107C41;"></div>
<div class="r" style="left:14.5px;top:172px;width:1px;height:14px;background:#DADADA;"></div>
<div class="r" style="left:0px;top:186px;width:15px;height:592px;background:#F3F3F3;"></div>
<div class="r" style="left:15px;top:186px;width:0.8px;height:592px;background:#D0D0D0;"></div>
<div class="r" style="left:0px;top:201.5px;width:15px;height:1px;background:#DEDEDE;"></div>
<div class="t" style="left:3.23px;top:189.94px;font-size:9.6px;line-height:11.03px;color:#333;transform:scaleX(0.9500);transform-origin:50% 0;-webkit-text-stroke:0.15px currentColor;">1</div>
<div class="r" style="left:0px;top:223.5px;width:15px;height:1px;background:#DEDEDE;"></div>
<div class="t" style="left:3.23px;top:210.32px;font-size:9.6px;line-height:11.03px;color:#333;transform:scaleX(0.9500);transform-origin:50% 0;-webkit-text-stroke:0.15px currentColor;">2</div>
<div class="r" style="left:0px;top:224px;width:15px;height:25px;background:#E1E1E1;"></div>
<div class="r" style="left:0px;top:248.5px;width:15px;height:1px;background:#DEDEDE;"></div>
<div class="t" style="left:3.23px;top:234.51px;font-size:9.6px;line-height:11.03px;color:#185E34;transform:scaleX(0.9500);transform-origin:50% 0;-webkit-text-stroke:0.15px currentColor;">3</div>
<div class="r" style="left:0px;top:264.5px;width:15px;height:1px;background:#DEDEDE;"></div>
<div class="t" style="left:3.23px;top:252.94px;font-size:9.6px;line-height:11.03px;color:#333;transform:scaleX(0.9500);transform-origin:50% 0;-webkit-text-stroke:0.15px currentColor;">4</div>
<div class="r" style="left:0px;top:280.5px;width:15px;height:1px;background:#DEDEDE;"></div>
<div class="t" style="left:3.23px;top:268.94px;font-size:9.6px;line-height:11.03px;color:#333;transform:scaleX(0.9500);transform-origin:50% 0;-webkit-text-stroke:0.15px currentColor;">5</div>
<div class="r" style="left:0px;top:295.5px;width:15px;height:1px;background:#DEDEDE;"></div>
<div class="t" style="left:3.23px;top:284.21px;font-size:9.6px;line-height:11.03px;color:#333;transform:scaleX(0.9500);transform-origin:50% 0;-webkit-text-stroke:0.15px currentColor;">6</div>
<div class="r" style="left:0px;top:310.5px;width:15px;height:1px;background:#DEDEDE;"></div>
<div class="t" style="left:3.23px;top:299.21px;font-size:9.6px;line-height:11.03px;color:#333;transform:scaleX(0.9500);transform-origin:50% 0;-webkit-text-stroke:0.15px currentColor;">7</div>
<div class="r" style="left:0px;top:326.5px;width:15px;height:1px;background:#DEDEDE;"></div>
<div class="t" style="left:3.23px;top:314.94px;font-size:9.6px;line-height:11.03px;color:#333;transform:scaleX(0.9500);transform-origin:50% 0;-webkit-text-stroke:0.15px currentColor;">8</div>
<div class="r" style="left:0px;top:341.5px;width:15px;height:1px;background:#DEDEDE;"></div>
<div class="t" style="left:3.23px;top:330.21px;font-size:9.6px;line-height:11.03px;color:#333;transform:scaleX(0.9500);transform-origin:50% 0;-webkit-text-stroke:0.15px currentColor;">9</div>
<div class="r" style="left:0px;top:365.5px;width:15px;height:1px;background:#DEDEDE;"></div>
<div class="t" style="left:0.56px;top:351.78px;font-size:9.6px;line-height:11.03px;color:#333;transform:scaleX(0.9500);transform-origin:50% 0;-webkit-text-stroke:0.15px currentColor;">10</div>
<div class="r" style="left:0px;top:388.5px;width:15px;height:1px;background:#DEDEDE;"></div>
<div class="t" style="left:0.92px;top:375.05px;font-size:9.6px;line-height:11.03px;color:#333;transform:scaleX(0.9500);transform-origin:50% 0;-webkit-text-stroke:0.15px currentColor;">11</div>
<div class="r" style="left:0px;top:406.5px;width:15px;height:1px;background:#DEDEDE;"></div>
<div class="t" style="left:0.56px;top:394.40px;font-size:9.6px;line-height:11.03px;color:#333;transform:scaleX(0.9500);transform-origin:50% 0;-webkit-text-stroke:0.15px currentColor;">12</div>
<div class="r" style="left:0px;top:424.5px;width:15px;height:1px;background:#DEDEDE;"></div>
<div class="t" style="left:0.56px;top:412.40px;font-size:9.6px;line-height:11.03px;color:#333;transform:scaleX(0.9500);transform-origin:50% 0;-webkit-text-stroke:0.15px currentColor;">13</div>
<div class="r" style="left:0px;top:439.5px;width:15px;height:1px;background:#DEDEDE;"></div>
<div class="t" style="left:0.56px;top:428.21px;font-size:9.6px;line-height:11.03px;color:#333;transform:scaleX(0.9500);transform-origin:50% 0;-webkit-text-stroke:0.15px currentColor;">14</div>
<div class="r" style="left:0px;top:454.5px;width:15px;height:1px;background:#DEDEDE;"></div>
<div class="t" style="left:0.56px;top:443.21px;font-size:9.6px;line-height:11.03px;color:#333;transform:scaleX(0.9500);transform-origin:50% 0;-webkit-text-stroke:0.15px currentColor;">15</div>
<div class="r" style="left:0px;top:478.5px;width:15px;height:1px;background:#DEDEDE;"></div>
<div class="t" style="left:0.56px;top:464.78px;font-size:9.6px;line-height:11.03px;color:#333;transform:scaleX(0.9500);transform-origin:50% 0;-webkit-text-stroke:0.15px currentColor;">16</div>
<div class="r" style="left:0px;top:496.5px;width:15px;height:1px;background:#DEDEDE;"></div>
<div class="t" style="left:0.56px;top:484.40px;font-size:9.6px;line-height:11.03px;color:#333;transform:scaleX(0.9500);transform-origin:50% 0;-webkit-text-stroke:0.15px currentColor;">17</div>
<div class="r" style="left:0px;top:520.5px;width:15px;height:1px;background:#DEDEDE;"></div>
<div class="t" style="left:0.56px;top:506.78px;font-size:9.6px;line-height:11.03px;color:#333;transform:scaleX(0.9500);transform-origin:50% 0;-webkit-text-stroke:0.15px currentColor;">18</div>
<div class="r" style="left:0px;top:539.5px;width:15px;height:1px;background:#DEDEDE;"></div>
<div class="t" style="left:0.56px;top:527.13px;font-size:9.6px;line-height:11.03px;color:#333;transform:scaleX(0.9500);transform-origin:50% 0;-webkit-text-stroke:0.15px currentColor;">19</div>
<div class="r" style="left:0px;top:554.5px;width:15px;height:1px;background:#DEDEDE;"></div>
<div class="t" style="left:0.56px;top:543.21px;font-size:9.6px;line-height:11.03px;color:#333;transform:scaleX(0.9500);transform-origin:50% 0;-webkit-text-stroke:0.15px currentColor;">20</div>
<div class="r" style="left:0px;top:569.5px;width:15px;height:1px;background:#DEDEDE;"></div>
<div class="t" style="left:0.56px;top:558.21px;font-size:9.6px;line-height:11.03px;color:#333;transform:scaleX(0.9500);transform-origin:50% 0;-webkit-text-stroke:0.15px currentColor;">21</div>
<div class="r" style="left:0px;top:585.5px;width:15px;height:1px;background:#DEDEDE;"></div>
<div class="t" style="left:0.56px;top:573.94px;font-size:9.6px;line-height:11.03px;color:#333;transform:scaleX(0.9500);transform-origin:50% 0;-webkit-text-stroke:0.15px currentColor;">22</div>
<div class="r" style="left:0px;top:600.5px;width:15px;height:1px;background:#DEDEDE;"></div>
<div class="t" style="left:0.56px;top:589.21px;font-size:9.6px;line-height:11.03px;color:#333;transform:scaleX(0.9500);transform-origin:50% 0;-webkit-text-stroke:0.15px currentColor;">23</div>
<div class="r" style="left:0px;top:614.5px;width:15px;height:1px;background:#DEDEDE;"></div>
<div class="t" style="left:0.56px;top:603.21px;font-size:9.6px;line-height:11.03px;color:#333;transform:scaleX(0.9500);transform-origin:50% 0;-webkit-text-stroke:0.15px currentColor;">24</div>
<div class="r" style="left:0px;top:628.5px;width:15px;height:1px;background:#DEDEDE;"></div>
<div class="t" style="left:0.56px;top:617.21px;font-size:9.6px;line-height:11.03px;color:#333;transform:scaleX(0.9500);transform-origin:50% 0;-webkit-text-stroke:0.15px currentColor;">25</div>
<div class="r" style="left:0px;top:652.5px;width:15px;height:1px;background:#DEDEDE;"></div>
<div class="t" style="left:0.56px;top:638.78px;font-size:9.6px;line-height:11.03px;color:#333;transform:scaleX(0.9500);transform-origin:50% 0;-webkit-text-stroke:0.15px currentColor;">26</div>
<div class="r" style="left:0px;top:676.5px;width:15px;height:1px;background:#DEDEDE;"></div>
<div class="t" style="left:0.56px;top:662.78px;font-size:9.6px;line-height:11.03px;color:#333;transform:scaleX(0.9500);transform-origin:50% 0;-webkit-text-stroke:0.15px currentColor;">27</div>
<div class="r" style="left:0px;top:693.5px;width:15px;height:1px;background:#DEDEDE;"></div>
<div class="t" style="left:0.56px;top:681.67px;font-size:9.6px;line-height:11.03px;color:#333;transform:scaleX(0.9500);transform-origin:50% 0;-webkit-text-stroke:0.15px currentColor;">28</div>
<div class="r" style="left:0px;top:707.5px;width:15px;height:1px;background:#DEDEDE;"></div>
<div class="t" style="left:0.56px;top:696.21px;font-size:9.6px;line-height:11.03px;color:#333;transform:scaleX(0.9500);transform-origin:50% 0;-webkit-text-stroke:0.15px currentColor;">29</div>
<div class="r" style="left:0px;top:721.5px;width:15px;height:1px;background:#DEDEDE;"></div>
<div class="t" style="left:0.56px;top:710.21px;font-size:9.6px;line-height:11.03px;color:#333;transform:scaleX(0.9500);transform-origin:50% 0;-webkit-text-stroke:0.15px currentColor;">30</div>
<div class="r" style="left:0px;top:736.5px;width:15px;height:1px;background:#DEDEDE;"></div>
<div class="t" style="left:0.56px;top:725.21px;font-size:9.6px;line-height:11.03px;color:#333;transform:scaleX(0.9500);transform-origin:50% 0;-webkit-text-stroke:0.15px currentColor;">31</div>
<div class="r" style="left:0px;top:750.5px;width:15px;height:1px;background:#DEDEDE;"></div>
<div class="t" style="left:0.56px;top:739.21px;font-size:9.6px;line-height:11.03px;color:#333;transform:scaleX(0.9500);transform-origin:50% 0;-webkit-text-stroke:0.15px currentColor;">32</div>
<div class="r" style="left:0px;top:765.5px;width:15px;height:1px;background:#DEDEDE;"></div>
<div class="t" style="left:0.56px;top:754.21px;font-size:9.6px;line-height:11.03px;color:#333;transform:scaleX(0.9500);transform-origin:50% 0;-webkit-text-stroke:0.15px currentColor;">33</div>
<div class="r" style="left:0px;top:777.5px;width:15px;height:1px;background:#DEDEDE;"></div>
<div class="t" style="left:0.56px;top:766.21px;font-size:9.6px;line-height:11.03px;color:#333;transform:scaleX(0.9500);transform-origin:50% 0;-webkit-text-stroke:0.15px currentColor;">34</div>
<div class="r" style="left:13.5px;top:224px;width:2px;height:25px;background:#107C41;"></div>
<div class="t" style="left:95.27px;top:206.54px;font-size:12px;line-height:13.79px;color:#222;font-style:italic;transform:scaleX(0.9225);transform-origin:50% 0;-webkit-text-stroke:0.12px currentColor;">Monthly Dashboard</div>
<div class="r" style="left:29px;top:224px;width:238px;height:25px;background:#D6DCE4;"></div>
<div class="t" style="left:108.67px;top:228.72px;font-size:16px;line-height:18.38px;color:#000;font-weight:bold;transform:scaleX(1.0096);transform-origin:50% 0;-webkit-text-stroke:0.12px currentColor;">November</div>
<div class="r" style="left:29px;top:249.6px;width:151px;height:14.8px;background:#EAEAEA;"></div>
<div class="r" style="left:181px;top:249.6px;width:86px;height:14.8px;background:#EAEAEA;"></div>
<div class="t" style="left:79.74px;top:252.15px;font-size:11px;line-height:12.64px;color:#1a1a1a;transform:scaleX(0.8800);transform-origin:50% 0;-webkit-text-stroke:0.12px currentColor;">Start Date</div>
<div class="t" style="left:200.88px;top:252.15px;font-size:11px;line-height:12.64px;color:#1a1a1a;transform:scaleX(0.8800);transform-origin:50% 0;-webkit-text-stroke:0.12px currentColor;">1-Nov-26</div>
<div class="r" style="left:29px;top:265.6px;width:151px;height:14.8px;background:#EAEAEA;"></div>
<div class="r" style="left:181px;top:265.6px;width:86px;height:14.8px;background:#EAEAEA;"></div>
<div class="t" style="left:81.57px;top:268.15px;font-size:11px;line-height:12.64px;color:#1a1a1a;transform:scaleX(0.8800);transform-origin:50% 0;-webkit-text-stroke:0.12px currentColor;">End Date</div>
<div class="t" style="left:197.82px;top:268.15px;font-size:11px;line-height:12.64px;color:#1a1a1a;transform:scaleX(0.8800);transform-origin:50% 0;-webkit-text-stroke:0.12px currentColor;">30-Nov-26</div>
<div class="r" style="left:29px;top:281.6px;width:151px;height:13.8px;background:#EAEAEA;"></div>
<div class="r" style="left:181px;top:281.6px;width:86px;height:13.8px;background:#EAEAEA;"></div>
<div class="t" style="left:71.48px;top:283.65px;font-size:11px;line-height:12.64px;color:#1a1a1a;transform:scaleX(0.8800);transform-origin:50% 0;-webkit-text-stroke:0.12px currentColor;">Start Balance</div>
<div class="t" style="left:209.74px;top:283.65px;font-size:11px;line-height:12.64px;color:#1a1a1a;transform:scaleX(0.8800);transform-origin:50% 0;-webkit-text-stroke:0.12px currentColor;">$0,00</div>
<div class="r" style="left:28.2px;top:223.6px;width:239.6px;height:26px;border:1.7px solid #107C41;box-sizing:border-box"></div>
<div class="r" style="left:264.8px;top:247px;width:4px;height:3.6px;background:#107C41;box-shadow:0 0 0 0.6px #fff;"></div>
<div class="r" style="left:268px;top:232px;width:15px;height:15px;background:#F9F9F9;border:1px solid #BFBFBF;box-sizing:border-box"></div>
<svg class="r" style="left:268px;top:232px" width="15" height="15"><path d="M4.5 6.5h6l-3 3z" fill="#555"/></svg>
<svg class="r" style="left:286px;top:225px" width="46" height="27"><path d="M2 13.5 L14 2 L14 7.5 L44 7.5 L44 19.5 L14 19.5 L14 25 Z" fill="#ED7D31"/></svg>
<div class="t" style="left:270.60px;top:251.65px;font-size:11px;line-height:12.64px;color:#000;font-weight:bold;font-style:italic;transform:scaleX(0.8690);transform-origin:0 0;-webkit-text-stroke:0.12px currentColor;">Select Month Here</div>
<div class="r" style="left:28.6px;top:302.2px;width:275.2px;height:159.6px;border:1.7px solid #0a0a0a;border-radius:1.5px;box-sizing:border-box;background:#fff"></div>
<div class="t" style="left:89.79px;top:312.63px;font-size:13px;line-height:14.94px;color:#000;font-weight:bold;transform:scaleX(0.8726);transform-origin:50% 0;-webkit-text-stroke:0.12px currentColor;">EXPENSE BREAKDOWN</div>
<div class="r" style="left:28.6px;top:466px;width:274.2px;height:168.3px;border:1.7px solid #0a0a0a;border-radius:1.5px;box-sizing:border-box;background:#fff"></div>
<svg class="r" style="left:0;top:0" width="320" height="640"><defs><filter id="psh" x="-20%" y="-20%" width="140%" height="140%"><feDropShadow dx="0" dy="1.3" stdDeviation="1.3" flood-color="#000" flood-opacity="0.38"/></filter></defs>
<circle cx="165.9" cy="395" r="47.1" fill="#fff" filter="url(#psh)"/>
<path d="M165.90,395.00 L165.90,348.50 A46.5,46.5 0 0 1 167.46,441.47 Z" fill="#5B9BD5" stroke="#fff" stroke-width="1.4" stroke-linejoin="round"/>
<path d="M165.90,395.00 L167.46,441.47 A46.5,46.5 0 0 1 122.68,412.16 Z" fill="#A5A5A5" stroke="#fff" stroke-width="1.4" stroke-linejoin="round"/>
<path d="M165.90,395.00 L122.68,412.16 A46.5,46.5 0 0 1 165.90,348.50 Z" fill="#4472C4" stroke="#fff" stroke-width="1.4" stroke-linejoin="round"/>
<circle cx="165.9" cy="395" r="46.5" fill="none" stroke="#fff" stroke-width="1.8"/>
<path d="M112.4,357.3 L117,357.5 L127,368.7" stroke="#A0A0A0" stroke-width="1.35" fill="none"/>
<path d="M213.3,394 L222,396.5 L232,396.8" stroke="#A0A0A0" stroke-width="1.35" fill="none"/>
<path d="M90.5,439 L135.3,434.3" stroke="#A0A0A0" stroke-width="1.35" fill="none"/>
<circle cx="166" cy="563.3" r="51.2" fill="#fff" filter="url(#psh)"/>
<path d="M166.00,563.30 L166.00,512.70 A50.6,50.6 0 0 1 207.06,533.73 Z" fill="#5B9BD5" stroke="#fff" stroke-width="1.4" stroke-linejoin="round"/>
<path d="M166.00,563.30 L207.06,533.73 A50.6,50.6 0 0 1 212.43,583.41 Z" fill="#A5A5A5" stroke="#fff" stroke-width="1.4" stroke-linejoin="round"/>
<path d="M166.00,563.30 L212.43,583.41 A50.6,50.6 0 0 1 146.89,610.15 Z" fill="#4472C4" stroke="#fff" stroke-width="1.4" stroke-linejoin="round"/>
<path d="M166.00,563.30 L146.89,610.15 A50.6,50.6 0 0 1 133.85,524.23 Z" fill="#255E91" stroke="#fff" stroke-width="1.4" stroke-linejoin="round"/>
<path d="M166.00,563.30 L133.85,524.23 A50.6,50.6 0 0 1 166.00,512.70 Z" fill="#636363" stroke="#fff" stroke-width="1.4" stroke-linejoin="round"/>
<circle cx="166" cy="563.3" r="50.6" fill="none" stroke="#fff" stroke-width="1.8"/>
<path d="M188.9,517.6 L193.9,501.9 L197.2,501.9" stroke="#A0A0A0" stroke-width="1.35" fill="none"/>
<path d="M216.8,556.8 L227.2,556.1" stroke="#A0A0A0" stroke-width="1.35" fill="none"/>
<path d="M186.3,610.6 L242.9,617.8" stroke="#A0A0A0" stroke-width="1.35" fill="none"/>
<path d="M114.8,572 L106.7,581.4 L98.7,581.4" stroke="#A0A0A0" stroke-width="1.35" fill="none"/>
<path d="M148.1,515 L125.2,508.9 L121,508.9" stroke="#A0A0A0" stroke-width="1.35" fill="none"/>
</svg>
<div class="t" style="left:78.89px;top:338.22px;font-size:8.6px;line-height:9.88px;color:#111;font-weight:bold;transform:scaleX(0.8974);transform-origin:50% 0;-webkit-text-stroke:0.1px #111;">DEBT</div>
<div class="t" style="left:67.42px;top:349.82px;font-size:8.6px;line-height:9.88px;color:#111;font-weight:bold;transform:scaleX(0.8974);transform-origin:50% 0;-webkit-text-stroke:0.1px #111;">PAYMENTS</div>
<div class="t" style="left:81.99px;top:361.22px;font-size:8.6px;line-height:9.88px;color:#111;font-weight:bold;transform:scaleX(0.8974);transform-origin:50% 0;-webkit-text-stroke:0.1px #111;">31%</div>
<div class="t" style="left:239.04px;top:377.82px;font-size:8.6px;line-height:9.88px;color:#111;font-weight:bold;transform:scaleX(0.8974);transform-origin:50% 0;-webkit-text-stroke:0.1px #111;">FIXED</div>
<div class="t" style="left:228.52px;top:389.32px;font-size:8.6px;line-height:9.88px;color:#111;font-weight:bold;transform:scaleX(0.8974);transform-origin:50% 0;-webkit-text-stroke:0.1px #111;">EXPENSES</div>
<div class="t" style="left:243.09px;top:400.72px;font-size:8.6px;line-height:9.88px;color:#111;font-weight:bold;transform:scaleX(0.8974);transform-origin:50% 0;-webkit-text-stroke:0.1px #111;">49%</div>
<div class="t" style="left:54.74px;top:417.92px;font-size:8.6px;line-height:9.88px;color:#111;font-weight:bold;transform:scaleX(0.8974);transform-origin:50% 0;-webkit-text-stroke:0.1px #111;">VARIABLE</div>
<div class="t" style="left:53.22px;top:429.32px;font-size:8.6px;line-height:9.88px;color:#111;font-weight:bold;transform:scaleX(0.8974);transform-origin:50% 0;-webkit-text-stroke:0.1px #111;">EXPENSES</div>
<div class="t" style="left:67.79px;top:440.52px;font-size:8.6px;line-height:9.88px;color:#111;font-weight:bold;transform:scaleX(0.8974);transform-origin:50% 0;-webkit-text-stroke:0.1px #111;">20%</div>
<div class="t" style="left:96.41px;top:475.94px;font-size:13px;line-height:14.94px;color:#000;font-weight:bold;transform:scaleX(0.8449);transform-origin:50% 0;-webkit-text-stroke:0.12px currentColor;">VARIABLE EXPENSES</div>
<div class="t" style="left:196.65px;top:494.51px;font-size:8.5px;line-height:9.77px;color:#111;font-weight:bold;transform:scaleX(0.8944);transform-origin:50% 0;-webkit-text-stroke:0.1px #111;">Groceries</div>
<div class="t" style="left:207.99px;top:505.91px;font-size:8.5px;line-height:9.77px;color:#111;font-weight:bold;transform:scaleX(0.8944);transform-origin:50% 0;-webkit-text-stroke:0.1px #111;">15%</div>
<div class="t" style="left:228.76px;top:549.21px;font-size:8.5px;line-height:9.77px;color:#111;font-weight:bold;transform:scaleX(0.8944);transform-origin:50% 0;-webkit-text-stroke:0.1px #111;">Fuel</div>
<div class="t" style="left:228.99px;top:560.31px;font-size:8.5px;line-height:9.77px;color:#111;font-weight:bold;transform:scaleX(0.8944);transform-origin:50% 0;-webkit-text-stroke:0.1px #111;">16%</div>
<div class="t" style="left:243.21px;top:611.71px;font-size:8.5px;line-height:9.77px;color:#111;font-weight:bold;transform:scaleX(0.8944);transform-origin:50% 0;-webkit-text-stroke:0.1px #111;">Eating Out</div>
<div class="t" style="left:256.19px;top:623.31px;font-size:8.5px;line-height:9.77px;color:#111;font-weight:bold;transform:scaleX(0.8944);transform-origin:50% 0;-webkit-text-stroke:0.1px #111;">25%</div>
<div class="t" style="left:45.92px;top:567.71px;font-size:8.5px;line-height:9.77px;color:#111;font-weight:bold;transform:scaleX(0.8944);transform-origin:50% 0;-webkit-text-stroke:0.1px #111;">Personal Care</div>
<div class="t" style="left:65.99px;top:579.31px;font-size:8.5px;line-height:9.77px;color:#111;font-weight:bold;transform:scaleX(0.8944);transform-origin:50% 0;-webkit-text-stroke:0.1px #111;">33%</div>
<div class="t" style="left:101.97px;top:499.71px;font-size:8.5px;line-height:9.77px;color:#111;font-weight:bold;transform:scaleX(0.8944);transform-origin:50% 0;-webkit-text-stroke:0.1px #111;">Other</div>
<div class="t" style="left:105.03px;top:511.11px;font-size:8.5px;line-height:9.77px;color:#111;font-weight:bold;transform:scaleX(0.8944);transform-origin:50% 0;-webkit-text-stroke:0.1px #111;">11%</div>
<div class="r" style="left:360px;top:202px;width:255px;height:22px;background:#2E75B6;"></div>
<div class="r" style="left:360px;top:224px;width:255px;height:25px;background:#BDD7EE;"></div>
<div class="r" style="left:360px;top:249px;width:112px;height:16px;background:#D9D9D9;"></div>
<div class="r" style="left:472px;top:249px;width:70px;height:16px;background:#fff;"></div>
<div class="r" style="left:542px;top:249px;width:73px;height:16px;background:#D9D9D9;"></div>
<div class="r" style="left:360px;top:265px;width:112px;height:16px;background:#D9D9D9;"></div>
<div class="r" style="left:472px;top:265px;width:70px;height:16px;background:#fff;"></div>
<div class="r" style="left:542px;top:265px;width:73px;height:16px;background:#D9D9D9;"></div>
<div class="r" style="left:360px;top:281px;width:112px;height:15px;background:#D9D9D9;"></div>
<div class="r" style="left:472px;top:281px;width:70px;height:15px;background:#fff;"></div>
<div class="r" style="left:542px;top:281px;width:73px;height:15px;background:#D9D9D9;"></div>
<div class="r" style="left:360px;top:296px;width:112px;height:15px;background:#D9D9D9;"></div>
<div class="r" style="left:472px;top:296px;width:70px;height:15px;background:#fff;"></div>
<div class="r" style="left:542px;top:296px;width:73px;height:15px;background:#D9D9D9;"></div>
<div class="r" style="left:360px;top:311px;width:112px;height:14px;background:#D9D9D9;"></div>
<div class="r" style="left:472px;top:311px;width:70px;height:14px;background:#fff;"></div>
<div class="r" style="left:542px;top:311px;width:73px;height:14px;background:#D9D9D9;"></div>
<div class="r" style="left:360px;top:263.8px;width:255px;height:2.3px;background:#fff;"></div>
<div class="r" style="left:472px;top:263.8px;width:70px;height:1px;background:#E4E4E4;"></div>
<div class="r" style="left:360px;top:279.8px;width:255px;height:2.3px;background:#fff;"></div>
<div class="r" style="left:472px;top:279.8px;width:70px;height:1px;background:#E4E4E4;"></div>
<div class="r" style="left:360px;top:294.8px;width:255px;height:2.3px;background:#fff;"></div>
<div class="r" style="left:472px;top:294.8px;width:70px;height:1px;background:#E4E4E4;"></div>
<div class="r" style="left:360px;top:309.8px;width:255px;height:2.3px;background:#fff;"></div>
<div class="r" style="left:472px;top:309.8px;width:70px;height:1px;background:#E4E4E4;"></div>
<div class="r" style="left:360px;top:247.8px;width:255px;height:1.4px;background:#DDA43F;"></div>
<div class="t" style="left:408.13px;top:205.27px;font-size:15.5px;line-height:17.81px;color:#fff;font-weight:bold;transform:scaleX(1.0268);transform-origin:50% 0;-webkit-text-stroke:0.12px currentColor;">MONTHLY SUMMARY</div>
<div class="t" style="left:480.80px;top:230.69px;font-size:11.5px;line-height:13.21px;color:#000;font-weight:bold;transform:scaleX(0.9407);transform-origin:50% 0;-webkit-text-stroke:0.25px currentColor;">Projected</div>
<div class="t" style="left:560.93px;top:230.69px;font-size:11.5px;line-height:13.21px;color:#000;font-weight:bold;transform:scaleX(0.9389);transform-origin:50% 0;-webkit-text-stroke:0.25px currentColor;">Actual</div>
<div class="t" style="left:384.18px;top:252.11px;font-size:10.6px;line-height:12.18px;color:#111;transform:scaleX(0.9300);transform-origin:50% 0;-webkit-text-stroke:0.25px currentColor;">Start Balance</div>
<div class="t" style="left:493.74px;top:252.11px;font-size:10.6px;line-height:12.18px;color:#111;transform:scaleX(0.9300);transform-origin:50% 0;-webkit-text-stroke:0.25px currentColor;">$0,00</div>
<div class="t" style="left:565.24px;top:252.11px;font-size:10.6px;line-height:12.18px;color:#111;transform:scaleX(0.9300);transform-origin:50% 0;-webkit-text-stroke:0.25px currentColor;">$0,00</div>
<div class="t" style="left:385.95px;top:268.11px;font-size:10.6px;line-height:12.18px;color:#111;transform:scaleX(0.9300);transform-origin:50% 0;-webkit-text-stroke:0.25px currentColor;">Total Income</div>
<div class="t" style="left:483.42px;top:268.11px;font-size:10.6px;line-height:12.18px;color:#111;transform:scaleX(0.9300);transform-origin:50% 0;-webkit-text-stroke:0.25px currentColor;">$8.700,00</div>
<div class="t" style="left:554.92px;top:268.11px;font-size:10.6px;line-height:12.18px;color:#111;transform:scaleX(0.9300);transform-origin:50% 0;-webkit-text-stroke:0.25px currentColor;">$9.500,00</div>
<div class="t" style="left:380.06px;top:283.61px;font-size:10.6px;line-height:12.18px;color:#111;transform:scaleX(0.9300);transform-origin:50% 0;-webkit-text-stroke:0.25px currentColor;">Total Expenses</div>
<div class="t" style="left:483.42px;top:283.61px;font-size:10.6px;line-height:12.18px;color:#111;transform:scaleX(0.9300);transform-origin:50% 0;-webkit-text-stroke:0.25px currentColor;">$3.600,00</div>
<div class="t" style="left:554.92px;top:283.61px;font-size:10.6px;line-height:12.18px;color:#111;transform:scaleX(0.9300);transform-origin:50% 0;-webkit-text-stroke:0.25px currentColor;">$3.740,00</div>
<div class="t" style="left:384.48px;top:298.61px;font-size:10.6px;line-height:12.18px;color:#111;transform:scaleX(0.9300);transform-origin:50% 0;-webkit-text-stroke:0.25px currentColor;">Total Savings</div>
<div class="t" style="left:483.42px;top:298.61px;font-size:10.6px;line-height:12.18px;color:#111;transform:scaleX(0.9300);transform-origin:50% 0;-webkit-text-stroke:0.25px currentColor;">$2.500,00</div>
<div class="t" style="left:554.92px;top:298.61px;font-size:10.6px;line-height:12.18px;color:#111;transform:scaleX(0.9300);transform-origin:50% 0;-webkit-text-stroke:0.25px currentColor;">$2.100,00</div>
<div class="t" style="left:384.19px;top:313.51px;font-size:10.6px;line-height:12.18px;color:#000;font-weight:bold;transform:scaleX(0.8600);transform-origin:50% 0;-webkit-text-stroke:0.25px currentColor;">End Balance</div>
<div class="t" style="left:483.42px;top:313.51px;font-size:10.6px;line-height:12.18px;color:#000;font-weight:bold;transform:scaleX(0.8600);transform-origin:50% 0;-webkit-text-stroke:0.25px currentColor;">$2.600,00</div>
<div class="t" style="left:554.92px;top:313.51px;font-size:10.6px;line-height:12.18px;color:#000;font-weight:bold;transform:scaleX(0.8600);transform-origin:50% 0;-webkit-text-stroke:0.25px currentColor;">$3.660,00</div>
<div class="r" style="left:358px;top:200px;width:258.70px;height:224.60px;border:1.7px solid #0d0d0d;box-sizing:border-box;"></div>
<div class="r" style="left:628.5px;top:202px;width:236.5px;height:22px;background:#2E75B6;"></div>
<div class="r" style="left:628.5px;top:224px;width:236.5px;height:25px;background:#9DC3E6;"></div>
<div class="r" style="left:628.5px;top:249px;width:236.5px;height:16px;background:#BDD7EE;"></div>
<div class="r" style="left:628.5px;top:265px;width:89.5px;height:16px;background:#D9D9D9;"></div>
<div class="r" style="left:718px;top:265px;width:73px;height:16px;background:#fff;"></div>
<div class="r" style="left:791px;top:265px;width:74px;height:16px;background:#D9D9D9;"></div>
<div class="r" style="left:628.5px;top:281px;width:89.5px;height:15px;background:#D9D9D9;"></div>
<div class="r" style="left:718px;top:281px;width:73px;height:15px;background:#fff;"></div>
<div class="r" style="left:791px;top:281px;width:74px;height:15px;background:#D9D9D9;"></div>
<div class="r" style="left:628.5px;top:296px;width:89.5px;height:15px;background:#D9D9D9;"></div>
<div class="r" style="left:718px;top:296px;width:73px;height:15px;background:#fff;"></div>
<div class="r" style="left:791px;top:296px;width:74px;height:15px;background:#D9D9D9;"></div>
<div class="r" style="left:628.5px;top:311px;width:89.5px;height:14px;background:#D9D9D9;"></div>
<div class="r" style="left:718px;top:311px;width:73px;height:14px;background:#fff;"></div>
<div class="r" style="left:791px;top:311px;width:74px;height:14px;background:#D9D9D9;"></div>
<div class="r" style="left:628.5px;top:279.8px;width:236.5px;height:2.3px;background:#fff;"></div>
<div class="r" style="left:718px;top:279.8px;width:73px;height:1px;background:#E4E4E4;"></div>
<div class="r" style="left:628.5px;top:294.8px;width:236.5px;height:2.3px;background:#fff;"></div>
<div class="r" style="left:718px;top:294.8px;width:73px;height:1px;background:#E4E4E4;"></div>
<div class="r" style="left:628.5px;top:309.8px;width:236.5px;height:2.3px;background:#fff;"></div>
<div class="r" style="left:718px;top:309.8px;width:73px;height:1px;background:#E4E4E4;"></div>
<div class="r" style="left:628.5px;top:264.3px;width:236.5px;height:1.4px;background:#DDA43F;"></div>
<div class="t" style="left:715.75px;top:205.27px;font-size:15.5px;line-height:17.81px;color:#fff;font-weight:bold;transform:scaleX(1.0080);transform-origin:50% 0;-webkit-text-stroke:0.12px currentColor;">INCOME</div>
<div class="t" style="left:716.72px;top:229.28px;font-size:13.5px;line-height:15.51px;color:#F9FAFC;font-weight:bold;-webkit-text-stroke:0.12px currentColor;">$9.500,00</div>
<div class="t" style="left:728.30px;top:251.19px;font-size:11.5px;line-height:13.21px;color:#000;font-weight:bold;transform:scaleX(0.9407);transform-origin:50% 0;-webkit-text-stroke:0.25px currentColor;">Projected</div>
<div class="t" style="left:810.43px;top:251.19px;font-size:11.5px;line-height:13.21px;color:#000;font-weight:bold;transform:scaleX(0.9389);transform-origin:50% 0;-webkit-text-stroke:0.25px currentColor;">Actual</div>
<div class="t" style="left:658.23px;top:268.11px;font-size:10.6px;line-height:12.18px;color:#111;transform:scaleX(0.9300);transform-origin:50% 0;-webkit-text-stroke:0.25px currentColor;">Salary</div>
<div class="t" style="left:730.92px;top:268.11px;font-size:10.6px;line-height:12.18px;color:#111;transform:scaleX(0.9300);transform-origin:50% 0;-webkit-text-stroke:0.25px currentColor;">$8.000,00</div>
<div class="t" style="left:804.42px;top:268.11px;font-size:10.6px;line-height:12.18px;color:#111;transform:scaleX(0.9300);transform-origin:50% 0;-webkit-text-stroke:0.25px currentColor;">$9.000,00</div>
<div class="t" style="left:643.79px;top:283.61px;font-size:10.6px;line-height:12.18px;color:#111;transform:scaleX(0.9300);transform-origin:50% 0;-webkit-text-stroke:0.25px currentColor;">Side Income</div>
<div class="t" style="left:735.34px;top:283.61px;font-size:10.6px;line-height:12.18px;color:#111;transform:scaleX(0.9300);transform-origin:50% 0;-webkit-text-stroke:0.25px currentColor;">$500,00</div>
<div class="t" style="left:808.84px;top:283.61px;font-size:10.6px;line-height:12.18px;color:#111;transform:scaleX(0.9300);transform-origin:50% 0;-webkit-text-stroke:0.25px currentColor;">$200,00</div>
<div class="t" style="left:637.60px;top:298.61px;font-size:10.6px;line-height:12.18px;color:#111;transform:scaleX(0.9300);transform-origin:50% 0;-webkit-text-stroke:0.25px currentColor;">Other Earnings</div>
<div class="t" style="left:735.34px;top:298.61px;font-size:10.6px;line-height:12.18px;color:#111;transform:scaleX(0.9300);transform-origin:50% 0;-webkit-text-stroke:0.25px currentColor;">$200,00</div>
<div class="t" style="left:808.84px;top:298.61px;font-size:10.6px;line-height:12.18px;color:#111;transform:scaleX(0.9300);transform-origin:50% 0;-webkit-text-stroke:0.25px currentColor;">$300,00</div>
<div class="t" style="left:660.98px;top:312.61px;font-size:10.6px;line-height:12.18px;color:#000;font-weight:bold;transform:scaleX(0.8600);transform-origin:50% 0;-webkit-text-stroke:0.25px currentColor;">Total</div>
<div class="t" style="left:730.92px;top:312.61px;font-size:10.6px;line-height:12.18px;color:#000;font-weight:bold;transform:scaleX(0.8600);transform-origin:50% 0;-webkit-text-stroke:0.25px currentColor;">$8.700,00</div>
<div class="t" style="left:804.42px;top:312.61px;font-size:10.6px;line-height:12.18px;color:#000;font-weight:bold;transform:scaleX(0.8600);transform-origin:50% 0;-webkit-text-stroke:0.25px currentColor;">$9.500,00</div>
<div class="r" style="left:627px;top:200px;width:239.20px;height:126.10px;border:1.7px solid #0d0d0d;box-sizing:border-box;"></div>
<div class="r" style="left:628.5px;top:342px;width:236.5px;height:24px;background:#2E75B6;"></div>
<div class="r" style="left:628.5px;top:366px;width:236.5px;height:23px;background:#9DC3E6;"></div>
<div class="r" style="left:628.5px;top:389px;width:236.5px;height:18px;background:#BDD7EE;"></div>
<div class="r" style="left:628.5px;top:407px;width:89.5px;height:18px;background:#D9D9D9;"></div>
<div class="r" style="left:718px;top:407px;width:73px;height:18px;background:#fff;"></div>
<div class="r" style="left:791px;top:407px;width:74px;height:18px;background:#D9D9D9;"></div>
<div class="r" style="left:628.5px;top:425px;width:89.5px;height:15px;background:#D9D9D9;"></div>
<div class="r" style="left:718px;top:425px;width:73px;height:15px;background:#fff;"></div>
<div class="r" style="left:791px;top:425px;width:74px;height:15px;background:#D9D9D9;"></div>
<div class="r" style="left:628.5px;top:440px;width:89.5px;height:15px;background:#D9D9D9;"></div>
<div class="r" style="left:718px;top:440px;width:73px;height:15px;background:#fff;"></div>
<div class="r" style="left:791px;top:440px;width:74px;height:15px;background:#D9D9D9;"></div>
<div class="r" style="left:628.5px;top:455px;width:89.5px;height:22px;background:#D9D9D9;"></div>
<div class="r" style="left:718px;top:455px;width:73px;height:22px;background:#fff;"></div>
<div class="r" style="left:791px;top:455px;width:74px;height:22px;background:#D9D9D9;"></div>
<div class="r" style="left:628.5px;top:423.8px;width:236.5px;height:2.3px;background:#fff;"></div>
<div class="r" style="left:718px;top:423.8px;width:73px;height:1px;background:#E4E4E4;"></div>
<div class="r" style="left:628.5px;top:438.8px;width:236.5px;height:2.3px;background:#fff;"></div>
<div class="r" style="left:718px;top:438.8px;width:73px;height:1px;background:#E4E4E4;"></div>
<div class="r" style="left:628.5px;top:453.8px;width:236.5px;height:2.3px;background:#fff;"></div>
<div class="r" style="left:718px;top:453.8px;width:73px;height:1px;background:#E4E4E4;"></div>
<div class="r" style="left:628.5px;top:406.3px;width:236.5px;height:1.4px;background:#DDA43F;"></div>
<div class="t" style="left:712.44px;top:346.27px;font-size:15.5px;line-height:17.81px;color:#fff;font-weight:bold;transform:scaleX(0.9590);transform-origin:50% 0;-webkit-text-stroke:0.12px currentColor;">SAVINGS</div>
<div class="t" style="left:716.72px;top:370.28px;font-size:13.5px;line-height:15.51px;color:#F9FAFC;font-weight:bold;transform:scaleX(1.0073);transform-origin:50% 0;-webkit-text-stroke:0.12px currentColor;">$2.100,00</div>
<div class="t" style="left:728.30px;top:392.19px;font-size:11.5px;line-height:13.21px;color:#000;font-weight:bold;transform:scaleX(0.9407);transform-origin:50% 0;-webkit-text-stroke:0.25px currentColor;">Projected</div>
<div class="t" style="left:810.43px;top:392.19px;font-size:11.5px;line-height:13.21px;color:#000;font-weight:bold;transform:scaleX(0.9389);transform-origin:50% 0;-webkit-text-stroke:0.25px currentColor;">Actual</div>
<div class="t" style="left:630.24px;top:411.11px;font-size:10.6px;line-height:12.18px;color:#111;transform:scaleX(0.9300);transform-origin:50% 0;-webkit-text-stroke:0.25px currentColor;">Emergency Funds</div>
<div class="t" style="left:730.92px;top:411.11px;font-size:10.6px;line-height:12.18px;color:#111;transform:scaleX(0.9300);transform-origin:50% 0;-webkit-text-stroke:0.25px currentColor;">$1.000,00</div>
<div class="t" style="left:804.42px;top:411.11px;font-size:10.6px;line-height:12.18px;color:#111;transform:scaleX(0.9300);transform-origin:50% 0;-webkit-text-stroke:0.25px currentColor;">$1.000,00</div>
<div class="t" style="left:644.68px;top:427.61px;font-size:10.6px;line-height:12.18px;color:#111;transform:scaleX(0.9300);transform-origin:50% 0;-webkit-text-stroke:0.25px currentColor;">Investments</div>
<div class="t" style="left:730.92px;top:427.61px;font-size:10.6px;line-height:12.18px;color:#111;transform:scaleX(0.9300);transform-origin:50% 0;-webkit-text-stroke:0.25px currentColor;">$1.000,00</div>
<div class="t" style="left:808.84px;top:427.61px;font-size:10.6px;line-height:12.18px;color:#111;transform:scaleX(0.9300);transform-origin:50% 0;-webkit-text-stroke:0.25px currentColor;">$600,00</div>
<div class="t" style="left:639.66px;top:442.61px;font-size:10.6px;line-height:12.18px;color:#111;transform:scaleX(0.9300);transform-origin:50% 0;-webkit-text-stroke:0.25px currentColor;">Sinking Funds</div>
<div class="t" style="left:735.34px;top:442.61px;font-size:10.6px;line-height:12.18px;color:#111;transform:scaleX(0.9300);transform-origin:50% 0;-webkit-text-stroke:0.25px currentColor;">$500,00</div>
<div class="t" style="left:808.84px;top:442.61px;font-size:10.6px;line-height:12.18px;color:#111;transform:scaleX(0.9300);transform-origin:50% 0;-webkit-text-stroke:0.25px currentColor;">$500,00</div>
<div class="t" style="left:660.98px;top:463.61px;font-size:10.6px;line-height:12.18px;color:#000;font-weight:bold;transform:scaleX(0.8600);transform-origin:50% 0;-webkit-text-stroke:0.25px currentColor;">Total</div>
<div class="t" style="left:730.92px;top:463.61px;font-size:10.6px;line-height:12.18px;color:#000;font-weight:bold;transform:scaleX(0.8600);transform-origin:50% 0;-webkit-text-stroke:0.25px currentColor;">$2.500,00</div>
<div class="t" style="left:804.42px;top:463.61px;font-size:10.6px;line-height:12.18px;color:#000;font-weight:bold;transform:scaleX(0.8600);transform-origin:50% 0;-webkit-text-stroke:0.25px currentColor;">$2.100,00</div>
<div class="r" style="left:627px;top:340px;width:239.20px;height:138.10px;border:1.7px solid #0d0d0d;box-sizing:border-box;"></div>
<div class="r" style="left:628.5px;top:499px;width:236.5px;height:22px;background:#2E75B6;"></div>
<div class="r" style="left:628.5px;top:521px;width:236.5px;height:19px;background:#9DC3E6;"></div>

<div class="t" style="left:653.60px;top:502.27px;font-size:15.5px;line-height:17.81px;color:#fff;font-weight:bold;transform:scaleX(1.0092);transform-origin:50% 0;-webkit-text-stroke:0.12px currentColor;">CUMMULATIVE SAVINGS</div>
<div class="t" style="left:712.97px;top:523.28px;font-size:13.5px;line-height:15.51px;color:#F9FAFC;font-weight:bold;transform:scaleX(1.0064);transform-origin:50% 0;-webkit-text-stroke:0.12px currentColor;">$24.450,00</div>
<div class="r" style="left:627px;top:497px;width:239.20px;height:42.60px;border:1.7px solid #0d0d0d;box-sizing:border-box;border-bottom:none;"></div>
<div class="r" style="left:877px;top:202px;width:253px;height:22px;background:#2E75B6;"></div>
<div class="r" style="left:877px;top:224px;width:253px;height:25px;background:#9DC3E6;"></div>
<div class="r" style="left:877px;top:249px;width:253px;height:16px;background:#BDD7EE;"></div>
<div class="r" style="left:877px;top:265px;width:98px;height:16px;background:#D9D9D9;"></div>
<div class="r" style="left:975px;top:265px;width:77px;height:16px;background:#fff;"></div>
<div class="r" style="left:1052px;top:265px;width:78px;height:16px;background:#D9D9D9;"></div>
<div class="r" style="left:877px;top:281px;width:98px;height:15px;background:#D9D9D9;"></div>
<div class="r" style="left:975px;top:281px;width:77px;height:15px;background:#fff;"></div>
<div class="r" style="left:1052px;top:281px;width:78px;height:15px;background:#D9D9D9;"></div>
<div class="r" style="left:877px;top:296px;width:98px;height:15px;background:#D9D9D9;"></div>
<div class="r" style="left:975px;top:296px;width:77px;height:15px;background:#fff;"></div>
<div class="r" style="left:1052px;top:296px;width:78px;height:15px;background:#D9D9D9;"></div>
<div class="r" style="left:877px;top:311px;width:98px;height:16px;background:#D9D9D9;"></div>
<div class="r" style="left:975px;top:311px;width:77px;height:16px;background:#fff;"></div>
<div class="r" style="left:1052px;top:311px;width:78px;height:16px;background:#D9D9D9;"></div>
<div class="r" style="left:877px;top:327px;width:98px;height:13px;background:#D9D9D9;"></div>
<div class="r" style="left:975px;top:327px;width:77px;height:13px;background:#fff;"></div>
<div class="r" style="left:1052px;top:327px;width:78px;height:13px;background:#D9D9D9;"></div>
<div class="r" style="left:877px;top:279.8px;width:253px;height:2.3px;background:#fff;"></div>
<div class="r" style="left:975px;top:279.8px;width:77px;height:1px;background:#E4E4E4;"></div>
<div class="r" style="left:877px;top:294.8px;width:253px;height:2.3px;background:#fff;"></div>
<div class="r" style="left:975px;top:294.8px;width:77px;height:1px;background:#E4E4E4;"></div>
<div class="r" style="left:877px;top:309.8px;width:253px;height:2.3px;background:#fff;"></div>
<div class="r" style="left:975px;top:309.8px;width:77px;height:1px;background:#E4E4E4;"></div>
<div class="r" style="left:877px;top:325.8px;width:253px;height:2.3px;background:#fff;"></div>
<div class="r" style="left:975px;top:325.8px;width:77px;height:1px;background:#E4E4E4;"></div>
<div class="r" style="left:877px;top:264.3px;width:253px;height:1.4px;background:#DDA43F;"></div>
<div class="t" style="left:936.74px;top:205.27px;font-size:15.5px;line-height:17.81px;color:#fff;font-weight:bold;transform:scaleX(0.9137);transform-origin:50% 0;-webkit-text-stroke:0.12px currentColor;">FIXED EXPENSES</div>
<div class="t" style="left:973.47px;top:229.28px;font-size:13.5px;line-height:15.51px;color:#F9FAFC;font-weight:bold;transform:scaleX(1.0023);transform-origin:50% 0;-webkit-text-stroke:0.12px currentColor;">$1.850,00</div>
<div class="t" style="left:987.30px;top:251.19px;font-size:11.5px;line-height:13.21px;color:#000;font-weight:bold;transform:scaleX(0.9407);transform-origin:50% 0;-webkit-text-stroke:0.25px currentColor;">Projected</div>
<div class="t" style="left:1073.43px;top:251.19px;font-size:11.5px;line-height:13.21px;color:#000;font-weight:bold;transform:scaleX(0.9389);transform-origin:50% 0;-webkit-text-stroke:0.25px currentColor;">Actual</div>
<div class="t" style="left:914.80px;top:268.11px;font-size:10.6px;line-height:12.18px;color:#111;transform:scaleX(0.9300);transform-origin:50% 0;-webkit-text-stroke:0.25px currentColor;">Rent</div>
<div class="t" style="left:994.34px;top:268.11px;font-size:10.6px;line-height:12.18px;color:#111;transform:scaleX(0.9300);transform-origin:50% 0;-webkit-text-stroke:0.25px currentColor;">$800,00</div>
<div class="t" style="left:1071.84px;top:268.11px;font-size:10.6px;line-height:12.18px;color:#111;transform:scaleX(0.9300);transform-origin:50% 0;-webkit-text-stroke:0.25px currentColor;">$800,00</div>
<div class="t" style="left:908.92px;top:283.61px;font-size:10.6px;line-height:12.18px;color:#111;transform:scaleX(0.9300);transform-origin:50% 0;-webkit-text-stroke:0.25px currentColor;">Utilities</div>
<div class="t" style="left:994.34px;top:283.61px;font-size:10.6px;line-height:12.18px;color:#111;transform:scaleX(0.9300);transform-origin:50% 0;-webkit-text-stroke:0.25px currentColor;">$500,00</div>
<div class="t" style="left:1071.84px;top:283.61px;font-size:10.6px;line-height:12.18px;color:#111;transform:scaleX(0.9300);transform-origin:50% 0;-webkit-text-stroke:0.25px currentColor;">$550,00</div>
<div class="t" style="left:902.72px;top:298.61px;font-size:10.6px;line-height:12.18px;color:#111;transform:scaleX(0.9300);transform-origin:50% 0;-webkit-text-stroke:0.25px currentColor;">Insurance</div>
<div class="t" style="left:994.34px;top:298.61px;font-size:10.6px;line-height:12.18px;color:#111;transform:scaleX(0.9300);transform-origin:50% 0;-webkit-text-stroke:0.25px currentColor;">$400,00</div>
<div class="t" style="left:1071.84px;top:298.61px;font-size:10.6px;line-height:12.18px;color:#111;transform:scaleX(0.9300);transform-origin:50% 0;-webkit-text-stroke:0.25px currentColor;">$400,00</div>
<div class="t" style="left:894.18px;top:314.11px;font-size:10.6px;line-height:12.18px;color:#111;transform:scaleX(0.9300);transform-origin:50% 0;-webkit-text-stroke:0.25px currentColor;">Subscriptions</div>
<div class="t" style="left:994.34px;top:314.11px;font-size:10.6px;line-height:12.18px;color:#111;transform:scaleX(0.9300);transform-origin:50% 0;-webkit-text-stroke:0.25px currentColor;">$100,00</div>
<div class="t" style="left:1071.84px;top:314.11px;font-size:10.6px;line-height:12.18px;color:#111;transform:scaleX(0.9300);transform-origin:50% 0;-webkit-text-stroke:0.25px currentColor;">$100,00</div>
<div class="t" style="left:913.73px;top:327.71px;font-size:10.6px;line-height:12.18px;color:#000;font-weight:bold;transform:scaleX(0.8600);transform-origin:50% 0;-webkit-text-stroke:0.25px currentColor;">Total</div>
<div class="t" style="left:989.92px;top:327.71px;font-size:10.6px;line-height:12.18px;color:#000;font-weight:bold;transform:scaleX(0.8600);transform-origin:50% 0;-webkit-text-stroke:0.25px currentColor;">$1.800,00</div>
<div class="t" style="left:1067.42px;top:327.71px;font-size:10.6px;line-height:12.18px;color:#000;font-weight:bold;transform:scaleX(0.8600);transform-origin:50% 0;-webkit-text-stroke:0.25px currentColor;">$1.850,00</div>
<div class="r" style="left:875px;top:200.5px;width:256.20px;height:140.60px;border:1.7px solid #0d0d0d;box-sizing:border-box;"></div>
<div class="r" style="left:877px;top:366px;width:253px;height:23px;background:#2E75B6;"></div>
<div class="r" style="left:877px;top:389px;width:253px;height:18px;background:#9DC3E6;"></div>
<div class="r" style="left:877px;top:407px;width:253px;height:18px;background:#BDD7EE;"></div>
<div class="r" style="left:877px;top:425px;width:98px;height:15px;background:#D9D9D9;"></div>
<div class="r" style="left:975px;top:425px;width:77px;height:15px;background:#fff;"></div>
<div class="r" style="left:1052px;top:425px;width:78px;height:15px;background:#D9D9D9;"></div>
<div class="r" style="left:877px;top:440px;width:98px;height:15px;background:#D9D9D9;"></div>
<div class="r" style="left:975px;top:440px;width:77px;height:15px;background:#fff;"></div>
<div class="r" style="left:1052px;top:440px;width:78px;height:15px;background:#D9D9D9;"></div>
<div class="r" style="left:877px;top:455px;width:98px;height:24px;background:#D9D9D9;"></div>
<div class="r" style="left:975px;top:455px;width:77px;height:24px;background:#fff;"></div>
<div class="r" style="left:1052px;top:455px;width:78px;height:24px;background:#D9D9D9;"></div>
<div class="r" style="left:877px;top:479px;width:98px;height:18px;background:#D9D9D9;"></div>
<div class="r" style="left:975px;top:479px;width:77px;height:18px;background:#fff;"></div>
<div class="r" style="left:1052px;top:479px;width:78px;height:18px;background:#D9D9D9;"></div>
<div class="r" style="left:877px;top:497px;width:98px;height:24px;background:#D9D9D9;"></div>
<div class="r" style="left:975px;top:497px;width:77px;height:24px;background:#fff;"></div>
<div class="r" style="left:1052px;top:497px;width:78px;height:24px;background:#D9D9D9;"></div>
<div class="r" style="left:877px;top:521px;width:98px;height:18px;background:#D9D9D9;"></div>
<div class="r" style="left:975px;top:521px;width:77px;height:18px;background:#fff;"></div>
<div class="r" style="left:1052px;top:521px;width:78px;height:18px;background:#D9D9D9;"></div>
<div class="r" style="left:877px;top:438.8px;width:253px;height:2.3px;background:#fff;"></div>
<div class="r" style="left:975px;top:438.8px;width:77px;height:1px;background:#E4E4E4;"></div>
<div class="r" style="left:877px;top:453.8px;width:253px;height:2.3px;background:#fff;"></div>
<div class="r" style="left:975px;top:453.8px;width:77px;height:1px;background:#E4E4E4;"></div>
<div class="r" style="left:877px;top:477.8px;width:253px;height:2.3px;background:#fff;"></div>
<div class="r" style="left:975px;top:477.8px;width:77px;height:1px;background:#E4E4E4;"></div>
<div class="r" style="left:877px;top:495.8px;width:253px;height:2.3px;background:#fff;"></div>
<div class="r" style="left:975px;top:495.8px;width:77px;height:1px;background:#E4E4E4;"></div>
<div class="r" style="left:877px;top:519.8px;width:253px;height:2.3px;background:#fff;"></div>
<div class="r" style="left:975px;top:519.8px;width:77px;height:1px;background:#E4E4E4;"></div>
<div class="r" style="left:877px;top:424.3px;width:253px;height:1.4px;background:#DDA43F;"></div>
<div class="t" style="left:920.52px;top:369.77px;font-size:15.5px;line-height:17.81px;color:#fff;font-weight:bold;transform:scaleX(0.9280);transform-origin:50% 0;-webkit-text-stroke:0.12px currentColor;">VARIABLE EXPENSES</div>
<div class="t" style="left:979.10px;top:390.78px;font-size:13.5px;line-height:15.51px;color:#F9FAFC;font-weight:bold;transform:scaleX(1.0082);transform-origin:50% 0;-webkit-text-stroke:0.12px currentColor;">$730,00</div>
<div class="t" style="left:987.30px;top:410.19px;font-size:11.5px;line-height:13.21px;color:#000;font-weight:bold;transform:scaleX(0.9407);transform-origin:50% 0;-webkit-text-stroke:0.25px currentColor;">Projected</div>
<div class="t" style="left:1073.43px;top:410.19px;font-size:11.5px;line-height:13.21px;color:#000;font-weight:bold;transform:scaleX(0.9389);transform-origin:50% 0;-webkit-text-stroke:0.25px currentColor;">Actual</div>
<div class="t" style="left:903.03px;top:427.01px;font-size:10.6px;line-height:12.18px;color:#111;transform:scaleX(0.9300);transform-origin:50% 0;-webkit-text-stroke:0.25px currentColor;">Groceries</div>
<div class="t" style="left:994.34px;top:427.01px;font-size:10.6px;line-height:12.18px;color:#111;transform:scaleX(0.9300);transform-origin:50% 0;-webkit-text-stroke:0.25px currentColor;">$100,00</div>
<div class="t" style="left:1072.23px;top:427.01px;font-size:10.6px;line-height:12.18px;color:#111;transform:scaleX(0.9300);transform-origin:50% 0;-webkit-text-stroke:0.25px currentColor;">$110,00</div>
<div class="t" style="left:915.69px;top:442.01px;font-size:10.6px;line-height:12.18px;color:#111;transform:scaleX(0.9300);transform-origin:50% 0;-webkit-text-stroke:0.25px currentColor;">Fuel</div>
<div class="t" style="left:994.34px;top:442.01px;font-size:10.6px;line-height:12.18px;color:#111;transform:scaleX(0.9300);transform-origin:50% 0;-webkit-text-stroke:0.25px currentColor;">$100,00</div>
<div class="t" style="left:1071.84px;top:442.01px;font-size:10.6px;line-height:12.18px;color:#111;transform:scaleX(0.9300);transform-origin:50% 0;-webkit-text-stroke:0.25px currentColor;">$120,00</div>
<div class="t" style="left:900.96px;top:461.51px;font-size:10.6px;line-height:12.18px;color:#111;transform:scaleX(0.9300);transform-origin:50% 0;-webkit-text-stroke:0.25px currentColor;">Eating Out</div>
<div class="t" style="left:994.34px;top:461.51px;font-size:10.6px;line-height:12.18px;color:#111;transform:scaleX(0.9300);transform-origin:50% 0;-webkit-text-stroke:0.25px currentColor;">$200,00</div>
<div class="t" style="left:1071.84px;top:461.51px;font-size:10.6px;line-height:12.18px;color:#111;transform:scaleX(0.9300);transform-origin:50% 0;-webkit-text-stroke:0.25px currentColor;">$180,00</div>
<div class="t" style="left:892.12px;top:482.51px;font-size:10.6px;line-height:12.18px;color:#111;transform:scaleX(0.9300);transform-origin:50% 0;-webkit-text-stroke:0.25px currentColor;">Personal Care</div>
<div class="t" style="left:994.34px;top:482.51px;font-size:10.6px;line-height:12.18px;color:#111;transform:scaleX(0.9300);transform-origin:50% 0;-webkit-text-stroke:0.25px currentColor;">$200,00</div>
<div class="t" style="left:1071.84px;top:482.51px;font-size:10.6px;line-height:12.18px;color:#111;transform:scaleX(0.9300);transform-origin:50% 0;-webkit-text-stroke:0.25px currentColor;">$240,00</div>
<div class="t" style="left:912.74px;top:503.51px;font-size:10.6px;line-height:12.18px;color:#111;transform:scaleX(0.9300);transform-origin:50% 0;-webkit-text-stroke:0.25px currentColor;">Other</div>
<div class="t" style="left:997.29px;top:503.51px;font-size:10.6px;line-height:12.18px;color:#111;transform:scaleX(0.9300);transform-origin:50% 0;-webkit-text-stroke:0.25px currentColor;">$50,00</div>
<div class="t" style="left:1074.79px;top:503.51px;font-size:10.6px;line-height:12.18px;color:#111;transform:scaleX(0.9300);transform-origin:50% 0;-webkit-text-stroke:0.25px currentColor;">$80,00</div>
<div class="t" style="left:913.73px;top:526.81px;font-size:10.6px;line-height:12.18px;color:#000;font-weight:bold;transform:scaleX(0.8600);transform-origin:50% 0;-webkit-text-stroke:0.25px currentColor;">Total</div>
<div class="t" style="left:994.34px;top:526.81px;font-size:10.6px;line-height:12.18px;color:#000;font-weight:bold;transform:scaleX(0.8600);transform-origin:50% 0;-webkit-text-stroke:0.25px currentColor;">$650,00</div>
<div class="t" style="left:1071.84px;top:526.81px;font-size:10.6px;line-height:12.18px;color:#000;font-weight:bold;transform:scaleX(0.8600);transform-origin:50% 0;-webkit-text-stroke:0.25px currentColor;">$730,00</div>
<div class="r" style="left:875px;top:364.5px;width:256.20px;height:176.10px;border:1.7px solid #0d0d0d;box-sizing:border-box;"></div>
<div class="r" style="left:360px;top:455px;width:255px;height:24px;background:#2E75B6;"></div>
<div class="r" style="left:360px;top:479px;width:255px;height:18px;background:#9DC3E6;"></div>
<div class="r" style="left:360px;top:497px;width:255px;height:24px;background:#BDD7EE;"></div>
<div class="r" style="left:360px;top:521px;width:112px;height:19px;background:#D9D9D9;"></div>
<div class="r" style="left:472px;top:521px;width:70px;height:19px;background:#fff;"></div>
<div class="r" style="left:542px;top:521px;width:73px;height:19px;background:#D9D9D9;"></div>
<div class="r" style="left:360px;top:540px;width:112px;height:15px;background:#D9D9D9;"></div>
<div class="r" style="left:472px;top:540px;width:70px;height:15px;background:#fff;"></div>
<div class="r" style="left:542px;top:540px;width:73px;height:15px;background:#D9D9D9;"></div>
<div class="r" style="left:360px;top:555px;width:112px;height:15px;background:#D9D9D9;"></div>
<div class="r" style="left:472px;top:555px;width:70px;height:15px;background:#fff;"></div>
<div class="r" style="left:542px;top:555px;width:73px;height:15px;background:#D9D9D9;"></div>
<div class="r" style="left:360px;top:570px;width:112px;height:15px;background:#D9D9D9;"></div>
<div class="r" style="left:472px;top:570px;width:70px;height:15px;background:#fff;"></div>
<div class="r" style="left:542px;top:570px;width:73px;height:15px;background:#D9D9D9;"></div>
<div class="r" style="left:360px;top:538.8px;width:255px;height:2.3px;background:#fff;"></div>
<div class="r" style="left:472px;top:538.8px;width:70px;height:1px;background:#E4E4E4;"></div>
<div class="r" style="left:360px;top:553.8px;width:255px;height:2.3px;background:#fff;"></div>
<div class="r" style="left:472px;top:553.8px;width:70px;height:1px;background:#E4E4E4;"></div>
<div class="r" style="left:360px;top:568.8px;width:255px;height:2.3px;background:#fff;"></div>
<div class="r" style="left:472px;top:568.8px;width:70px;height:1px;background:#E4E4E4;"></div>
<div class="r" style="left:360px;top:520.3px;width:255px;height:1.4px;background:#DDA43F;"></div>
<div class="t" style="left:422.47px;top:459.27px;font-size:15.5px;line-height:17.81px;color:#fff;font-weight:bold;transform:scaleX(0.9819);transform-origin:50% 0;-webkit-text-stroke:0.12px currentColor;">DEBT PAYMENTS</div>
<div class="t" style="left:457.47px;top:480.78px;font-size:13.5px;line-height:15.51px;color:#F9FAFC;font-weight:bold;transform:scaleX(1.0040);transform-origin:50% 0;-webkit-text-stroke:0.12px currentColor;">$1.160,00</div>
<div class="t" style="left:480.80px;top:503.19px;font-size:11.5px;line-height:13.21px;color:#000;font-weight:bold;transform:scaleX(0.9407);transform-origin:50% 0;-webkit-text-stroke:0.25px currentColor;">Projected</div>
<div class="t" style="left:560.93px;top:503.19px;font-size:11.5px;line-height:13.21px;color:#000;font-weight:bold;transform:scaleX(0.9389);transform-origin:50% 0;-webkit-text-stroke:0.25px currentColor;">Actual</div>
<div class="t" style="left:404.21px;top:525.61px;font-size:10.6px;line-height:12.18px;color:#111;transform:scaleX(0.9300);transform-origin:50% 0;-webkit-text-stroke:0.25px currentColor;">Loan</div>
<div class="t" style="left:483.42px;top:525.61px;font-size:10.6px;line-height:12.18px;color:#111;transform:scaleX(0.9300);transform-origin:50% 0;-webkit-text-stroke:0.25px currentColor;">$1.000,00</div>
<div class="t" style="left:554.92px;top:525.61px;font-size:10.6px;line-height:12.18px;color:#111;transform:scaleX(0.9300);transform-origin:50% 0;-webkit-text-stroke:0.25px currentColor;">$1.000,00</div>
<div class="t" style="left:388.90px;top:542.61px;font-size:10.6px;line-height:12.18px;color:#111;transform:scaleX(0.9300);transform-origin:50% 0;-webkit-text-stroke:0.25px currentColor;">Credit Card</div>
<div class="t" style="left:487.84px;top:542.61px;font-size:10.6px;line-height:12.18px;color:#111;transform:scaleX(0.9300);transform-origin:50% 0;-webkit-text-stroke:0.25px currentColor;">$100,00</div>
<div class="t" style="left:559.73px;top:542.61px;font-size:10.6px;line-height:12.18px;color:#111;transform:scaleX(0.9300);transform-origin:50% 0;-webkit-text-stroke:0.25px currentColor;">$110,00</div>
<div class="t" style="left:406.58px;top:557.61px;font-size:10.6px;line-height:12.18px;color:#111;transform:scaleX(0.9300);transform-origin:50% 0;-webkit-text-stroke:0.25px currentColor;">EMI</div>
<div class="t" style="left:490.79px;top:557.61px;font-size:10.6px;line-height:12.18px;color:#111;transform:scaleX(0.9300);transform-origin:50% 0;-webkit-text-stroke:0.25px currentColor;">$50,00</div>
<div class="t" style="left:562.29px;top:557.61px;font-size:10.6px;line-height:12.18px;color:#111;transform:scaleX(0.9300);transform-origin:50% 0;-webkit-text-stroke:0.25px currentColor;">$50,00</div>
<div class="t" style="left:403.73px;top:573.41px;font-size:10.6px;line-height:12.18px;color:#000;font-weight:bold;transform:scaleX(0.8600);transform-origin:50% 0;-webkit-text-stroke:0.25px currentColor;">Total</div>
<div class="t" style="left:483.42px;top:573.41px;font-size:10.6px;line-height:12.18px;color:#000;font-weight:bold;transform:scaleX(0.8600);transform-origin:50% 0;-webkit-text-stroke:0.25px currentColor;">$1.150,00</div>
<div class="t" style="left:554.92px;top:573.41px;font-size:10.6px;line-height:12.18px;color:#000;font-weight:bold;transform:scaleX(0.8600);transform-origin:50% 0;-webkit-text-stroke:0.25px currentColor;">$1.160,00</div>
<div class="r" style="left:358px;top:453.7px;width:258.70px;height:132.40px;border:1.7px solid #0d0d0d;box-sizing:border-box;"></div>
<div class="r" style="left:431px;top:329px;width:178.5px;height:90.5px;border:1px solid #D9D9D9;box-sizing:border-box;background:#fff"></div>
<div class="t" style="left:371.00px;top:354.04px;font-size:13px;line-height:14.94px;color:#000;font-weight:bold;transform:scaleX(0.8304);transform-origin:0 0;-webkit-text-stroke:0.12px currentColor;">EXPENSE</div>
<div class="t" style="left:371.00px;top:382.04px;font-size:13px;line-height:14.94px;color:#000;font-weight:bold;transform:scaleX(0.9231);transform-origin:0 0;-webkit-text-stroke:0.12px currentColor;">INCOME</div>
<svg class="r" style="left:430px;top:330px" width="180" height="90">
<path d="M29.50000000000001,18.7 L24.100000000000012,24.5 L24.100000000000012,42.60000000000002 L27.600000000000012,40.40000000000002" stroke="#9A9A9A" stroke-width="1.3" fill="none"/><rect x="24.30000000000001" y="24.5" width="46.89999999999998" height="15.600000000000023" fill="#5B9BD5"/><path d="M24.30000000000001,24.5 L28.900000000000013,20.8 L75.79999999999998,20.8 L71.19999999999999,24.5 Z" fill="#41719C"/><path d="M71.19999999999999,24.5 L75.79999999999998,20.8 L75.79999999999998,36.40000000000002 L71.19999999999999,40.10000000000002 Z" fill="#3A6590"/>
<path d="M29.50000000000001,46.800000000000026 L24.100000000000012,52.60000000000002 L24.100000000000012,70.10000000000002 L27.600000000000012,67.90000000000002" stroke="#9A9A9A" stroke-width="1.3" fill="none"/><rect x="24.30000000000001" y="52.60000000000002" width="119.09999999999997" height="15.0" fill="#5B9BD5"/><path d="M24.30000000000001,52.60000000000002 L28.900000000000013,48.90000000000002 L147.99999999999997,48.90000000000002 L143.39999999999998,52.60000000000002 Z" fill="#41719C"/><path d="M143.39999999999998,52.60000000000002 L147.99999999999997,48.90000000000002 L147.99999999999997,63.90000000000002 L143.39999999999998,67.60000000000002 Z" fill="#3A6590"/>
</svg>
<div class="t" style="left:463.44px;top:360.42px;font-size:6.5px;line-height:7.47px;color:#fff;font-weight:bold;transform:scaleX(0.9856);transform-origin:50% 0;-webkit-text-stroke:0.12px currentColor;">$3.740,00</div>
<div class="t" style="left:499.24px;top:387.52px;font-size:6.5px;line-height:7.47px;color:#fff;font-weight:bold;-webkit-text-stroke:0.12px currentColor;">$9.500,00</div>
<div class="r" style="left:180px;top:778px;width:110px;height:12px;background:#fff;"></div>
<div class="r" style="left:0px;top:778px;width:196.6px;height:30px;background:#EDECE1;border-top-right-radius:7px;"></div>
<div class="r" style="left:277.2px;top:778px;width:1167.8px;height:30px;background:#EDECE1;border-top-left-radius:7px;"></div>
<div class="r" style="left:0px;top:808px;width:1445px;height:9px;background:#F3F3F3;"></div>
<div class="r" style="left:1427px;top:172px;width:18px;height:636px;background:#EDECE3;"></div>
<div class="r" style="left:1429.5px;top:171px;width:15px;height:609px;background:#F6F6F6;border-radius:7.5px;"></div>
<svg class="r" style="left:0;top:0" width="1445" height="800"><path d="M1433 182.6 L1441.2 182.6 L1437.1 176 Z" fill="#6F6F6F"/><rect x="1433" y="187.5" width="8.2" height="560.5" rx="4.1" fill="#707070"/><path d="M1433 770 L1441.2 770 L1437.1 775.8 Z" fill="#6F6F6F"/></svg>
<svg class="r" style="left:15px;top:785px" width="50" height="18"><path d="M10 4 L6 9 L10 14" stroke="#8a8a8a" stroke-width="1.1" fill="none"/><path d="M36 4 L40 9 L36 14" stroke="#333" stroke-width="1.1" fill="none"/></svg>
<div class="r" style="left:196.6px;top:777px;width:80.6px;height:28px;background:#FFFFFF;border-radius:0 0 6px 6px;"></div>
<div class="t" style="left:109.98px;top:786.48px;font-size:13.5px;line-height:15.51px;color:#333;transform:scaleX(0.9851);transform-origin:50% 0;-webkit-text-stroke:0.12px currentColor;">Instructions</div>
<div class="t" style="left:201.44px;top:783.58px;font-size:13.5px;line-height:15.51px;color:#1b1b1b;font-weight:bold;transform:scaleX(0.9133);transform-origin:50% 0;-webkit-text-stroke:0.12px currentColor;">Dashboard</div>
<div class="r" style="left:204.5px;top:801px;width:64.5px;height:2px;background:#107C41;border-radius:1px;"></div>
<div class="t" style="left:291.76px;top:786.48px;font-size:13.5px;line-height:15.51px;color:#333;transform:scaleX(0.9645);transform-origin:50% 0;-webkit-text-stroke:0.12px currentColor;">January - Input Sheet</div>
<div class="t" style="left:443.96px;top:786.48px;font-size:13.5px;line-height:15.51px;color:#333;transform:scaleX(0.9698);transform-origin:50% 0;-webkit-text-stroke:0.12px currentColor;">February - Input Sheet</div>
<div class="t" style="left:602.22px;top:786.48px;font-size:13.5px;line-height:15.51px;color:#333;transform:scaleX(0.9868);transform-origin:50% 0;-webkit-text-stroke:0.12px currentColor;">March - Input Sheet</div>
<div class="t" style="left:747.60px;top:786.48px;font-size:13.5px;line-height:15.51px;color:#333;transform:scaleX(0.9735);transform-origin:0 0;-webkit-text-stroke:0.12px currentColor;">April - Ir</div>
<div class="r" style="left:191.8px;top:786px;width:1px;height:16px;background:#D0D0CC;"></div>
<div class="r" style="left:281.5px;top:786px;width:1px;height:16px;background:#D0D0CC;"></div>
<div class="r" style="left:432.5px;top:786px;width:1px;height:16px;background:#D0D0CC;"></div>
<div class="r" style="left:590.4px;top:786px;width:1px;height:16px;background:#D0D0CC;"></div>
<div class="r" style="left:733.5px;top:786px;width:1px;height:16px;background:#D0D0CC;"></div>
<svg class="r" style="left:800px;top:784px" width="85" height="20"><circle cx="4" cy="9.5" r="1.2" fill="#333"/><circle cx="8" cy="9.5" r="1.2" fill="#333"/><circle cx="12" cy="9.5" r="1.2" fill="#333"/><path d="M33 9.5 h11 M38.5 4 v11" stroke="#333" stroke-width="1.3"/><circle cx="69" cy="5" r="1.1" fill="#333"/><circle cx="69" cy="9.5" r="1.1" fill="#333"/><circle cx="69" cy="14" r="1.1" fill="#333"/></svg>
<div class="r" style="left:885.5px;top:785.5px;width:542px;height:15.5px;background:#F5F5F5;border-radius:8px;"></div>
<svg class="r" style="left:885px;top:785px" width="545" height="16"><path d="M10.5 4.5 L5 8.5 L10.5 12.5 Z" fill="#666"/><path d="M533.5 4.5 L539.5 8.5 L533.5 12.5 Z" fill="#666"/><rect x="15.5" y="4" width="445.5" height="8.5" rx="4.25" fill="#707070"/></svg>
<div class="r" style="left:1165px;top:809.4px;width:38px;height:8px;background:#DCDCDC;"></div>
<svg class="r" style="left:0;top:807px" width="1445" height="10"><rect x="56" y="6" width="14" height="8" fill="#7a7a7a"/><path d="M86.5 8.5h11v6h-11z M89.5 6h5v3.5h-5z" stroke="#444" stroke-width="1.1" fill="none"/><rect x="1177" y="6" width="13" height="8" fill="none" stroke="#333" stroke-width="1.2"/><path d="M1177 9h13 M1181.3 6v8 M1185.6 6v8" stroke="#333" stroke-width="1"/><rect x="1215" y="6" width="13" height="8" fill="none" stroke="#333" stroke-width="1.2"/><rect x="1218" y="8.5" width="7" height="4" fill="none" stroke="#333" stroke-width="0.9"/><rect x="1252.5" y="6" width="13" height="8" fill="none" stroke="#333" stroke-width="1.2"/><path d="M1256.8 6v8 M1261.1 6v8" stroke="#333" stroke-width="1"/><rect x="1331" y="6.5" width="4" height="5" fill="#333"/><path d="M1397.5 5.5 v6" stroke="#333" stroke-width="1"/></svg>
<div class="t" style="left:1414.00px;top:812.59px;font-size:11.5px;line-height:13.21px;color:#222;font-weight:bold;transform:scaleX(0.5780);transform-origin:0 0;-webkit-text-stroke:0.12px currentColor;">100%</div>
<div class="t" style="left:101.70px;top:813.39px;font-size:11.5px;line-height:13.21px;color:#222;font-weight:bold;-webkit-text-stroke:0.12px currentColor;">Accessibilità: verifica</div>
<div class="t" style="left:6.50px;top:813.39px;font-size:11.5px;line-height:13.21px;color:#222;-webkit-text-stroke:0.12px currentColor;">Pronto</div>
</body></html>
